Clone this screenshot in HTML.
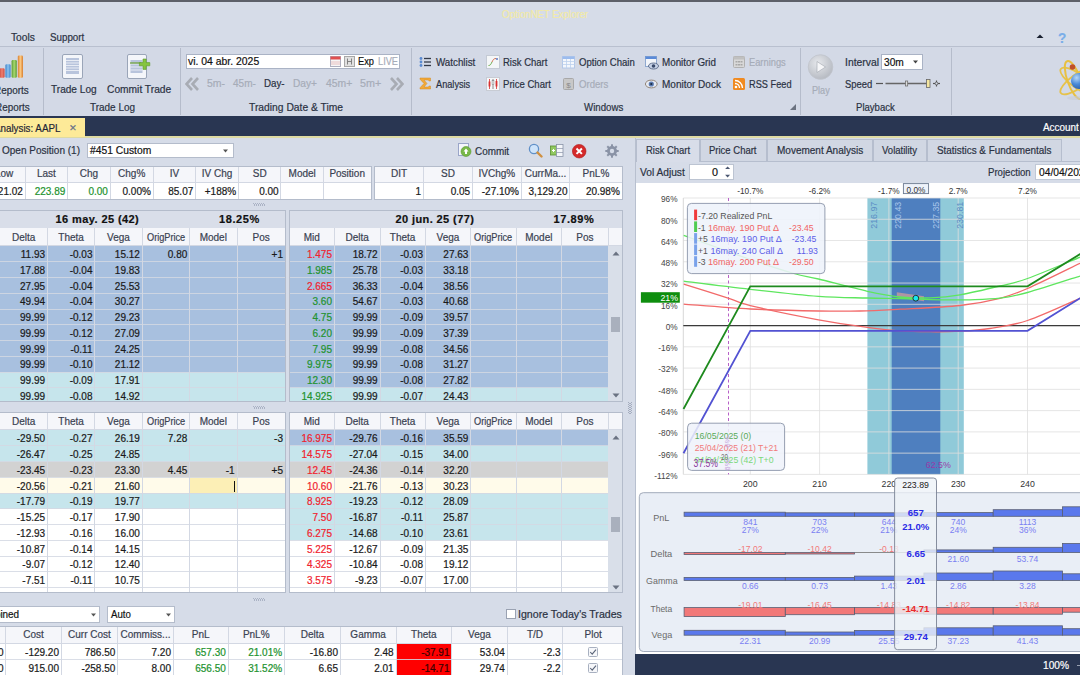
<!DOCTYPE html>
<html><head><meta charset="utf-8"><style>
html,body{margin:0;padding:0;width:1080px;height:675px;overflow:hidden;background:#d6dce8;}
body{position:relative;font-family:"Liberation Sans",sans-serif;font-size:10px;color:#1e1e1e;}
.t{position:absolute;white-space:nowrap;-webkit-text-stroke:0.2px currentColor;}
</style></head><body>
<div style="position:absolute;left:0px;top:0px;width:1080px;height:2px;background:#5d6069;"></div>
<svg style="position:absolute;left:1035.5px;top:34.3px" width="8" height="5"><path d="M0.5 4 L4 0.5 L7.5 4Z" fill="#1a2030"/></svg>
<div style="position:absolute;left:0px;top:47px;width:1080px;height:69px;background:#d3d9e6;"></div>
<div style="position:absolute;left:0px;top:46px;width:1080px;height:1px;background:#b9c0cf;"></div>
<div style="position:absolute;left:43.3px;top:47.5px;width:1px;height:67px;background:#b5bccb;"></div>
<div style="position:absolute;left:180px;top:47.5px;width:1px;height:67px;background:#b5bccb;"></div>
<div style="position:absolute;left:411.2px;top:47.5px;width:1px;height:67px;background:#b5bccb;"></div>
<div style="position:absolute;left:800.4px;top:47.5px;width:1px;height:67px;background:#b5bccb;"></div>
<div style="position:absolute;left:951px;top:47.5px;width:1px;height:67px;background:#b5bccb;"></div>
<svg style="position:absolute;left:790px;top:104px" width="7" height="7"><path d="M6 0 L6 6 L0 6Z" fill="#6b7280"/></svg>
<svg style="position:absolute;left:0px;top:54px" width="24" height="25">
<defs><linearGradient id="rbr" x1="0" x2="1"><stop offset="0" stop-color="#c84a40"/><stop offset="0.5" stop-color="#f08070"/><stop offset="1" stop-color="#c84a40"/></linearGradient>
<linearGradient id="rbb" x1="0" x2="1"><stop offset="0" stop-color="#3a80c8"/><stop offset="0.5" stop-color="#8cc4f0"/><stop offset="1" stop-color="#3a80c8"/></linearGradient>
<linearGradient id="rbg" x1="0" x2="1"><stop offset="0" stop-color="#5a9a30"/><stop offset="0.5" stop-color="#a8d870"/><stop offset="1" stop-color="#5a9a30"/></linearGradient>
<linearGradient id="rbo" x1="0" x2="1"><stop offset="0" stop-color="#d88030"/><stop offset="0.5" stop-color="#fcc880"/><stop offset="1" stop-color="#d88030"/></linearGradient></defs>
<rect x="-0.6" y="14.3" width="5.2" height="9.4" rx="1.2" fill="url(#rbr)"/>
<rect x="5.4" y="10.3" width="5.2" height="13.4" rx="1.2" fill="url(#rbb)"/>
<rect x="11.6" y="6.1" width="5.2" height="17.6" rx="1.2" fill="url(#rbg)"/>
<rect x="17.8" y="1.6" width="5.2" height="22.1" rx="1.2" fill="url(#rbo)"/>
</svg>
<svg style="position:absolute;left:62px;top:54px" width="21" height="25">
<rect x="0.5" y="0.5" width="20" height="24" rx="1.5" fill="#f4f6fa" stroke="#9aa5b8"/>
<rect x="4" y="4" width="13" height="16" fill="#b8c4dc"/>
<g stroke="#f4f6fa" stroke-width="0.8"><line x1="4" y1="6.5" x2="17" y2="6.5"/><line x1="4" y1="9" x2="17" y2="9"/><line x1="4" y1="11.5" x2="17" y2="11.5"/><line x1="4" y1="14" x2="17" y2="14"/><line x1="4" y1="16.5" x2="17" y2="16.5"/></g>
</svg>
<svg style="position:absolute;left:127px;top:54px" width="26" height="25">
<rect x="0.5" y="0.5" width="19" height="24" rx="1.5" fill="#f4f6fa" stroke="#9aa5b8"/>
<rect x="3.5" y="6" width="12" height="13" fill="#b8c4dc"/>
<g stroke="#f4f6fa" stroke-width="0.8"><line x1="3.5" y1="10" x2="15.5" y2="10"/><line x1="3.5" y1="13" x2="15.5" y2="13"/><line x1="3.5" y1="16" x2="15.5" y2="16"/></g>
<line x1="3" y1="9" x2="14" y2="9" stroke="#6aa030" stroke-width="1.2"/>
<path d="M16 5 h3.2 v3.6 h3.6 v3.2 h-3.6 v3.6 h-3.2 v-3.6 h-3.6 v-3.2 h3.6z" fill="#86c440" stroke="#5a9a28" stroke-width="0.6"/>
</svg>
<div style="position:absolute;left:186px;top:54px;width:214px;height:15px;background:#fff;border:1px solid #aab3c5;box-sizing:border-box;"></div>
<svg style="position:absolute;left:330px;top:56px" width="11" height="11">
<rect x="0.5" y="0.5" width="10" height="10" fill="#f6f6f6" stroke="#b0b0c0"/><rect x="0.5" y="0.5" width="10" height="3" fill="#e05050"/>
<g stroke="#e0a0a0" stroke-width="0.6"><line x1="1" y1="6" x2="10" y2="6"/><line x1="1" y1="8" x2="10" y2="8"/></g></svg>
<svg style="position:absolute;left:344px;top:56px" width="11" height="11">
<rect x="0.5" y="0.5" width="10" height="10" fill="#e0e0e0" stroke="#a8a8a8"/><path d="M3.5 2.5v6M7.5 2.5v6M3.5 5.5h4" stroke="#777" stroke-width="0.9"/></svg>
<svg style="position:absolute;left:185px;top:77px" width="15" height="14"><path d="M7 1 L1.5 7 L7 13 M13 1 L7.5 7 L13 13" fill="none" stroke="#a8acb4" stroke-width="2.6"/></svg>
<svg style="position:absolute;left:389px;top:77px" width="15" height="14"><path d="M8 1 L13.5 7 L8 13 M2 1 L7.5 7 L2 13" fill="none" stroke="#a8acb4" stroke-width="2.6"/></svg>
<svg style="position:absolute;left:419px;top:56px" width="13" height="12">
<circle cx="2" cy="2.5" r="1.4" fill="#5a8ad0"/><circle cx="2" cy="6" r="1.4" fill="#5a8ad0"/><circle cx="2" cy="9.5" r="1.4" fill="#5a8ad0"/>
<g stroke="#333a48" stroke-width="1.3"><line x1="5" y1="2.5" x2="12" y2="2.5"/><line x1="5" y1="6" x2="12" y2="6"/><line x1="5" y1="9.5" x2="12" y2="9.5"/></g></svg>
<svg style="position:absolute;left:486px;top:55px" width="14" height="14">
<rect x="0.5" y="0.5" width="13" height="13" fill="#f4f6f8" stroke="#c4cad4"/><path d="M2.5 10.5 C4.5 10.5 5 9 6 7" fill="none" stroke="#6aaa4a" stroke-width="1"/><path d="M6 7 C7 5 7.5 3.5 10 3.5" fill="none" stroke="#d07050" stroke-width="1"/><circle cx="11" cy="4" r="0.9" fill="#4a6ac0"/></svg>
<svg style="position:absolute;left:561.5px;top:55.5px" width="14" height="13">
<rect x="0.5" y="0.5" width="12" height="11.5" fill="#f4f7fc" stroke="#b4c8e8"/><rect x="0.5" y="0.5" width="12" height="2.5" fill="#9cbcee"/>
<g stroke="#bcd0ee" stroke-width="0.8"><line x1="0.5" y1="5.5" x2="12.5" y2="5.5"/><line x1="0.5" y1="8.5" x2="12.5" y2="8.5"/><line x1="4.5" y1="3" x2="4.5" y2="12"/><line x1="8.5" y1="3" x2="8.5" y2="12"/></g></svg>
<svg style="position:absolute;left:486px;top:77px" width="14" height="14">
<rect x="0.5" y="0.5" width="13" height="13" fill="#f6f7f9" stroke="#c8ccd4"/><g stroke-width="0.8"><line x1="3.5" y1="2" x2="3.5" y2="12" stroke="#d83030"/><line x1="10.5" y1="2" x2="10.5" y2="12" stroke="#d83030"/><line x1="7" y1="2" x2="7" y2="12" stroke="#707070"/></g>
<rect x="2.6" y="4.5" width="1.8" height="5" fill="#d83030"/><rect x="9.6" y="4" width="1.8" height="5.5" fill="#d83030"/><rect x="6.1" y="3.5" width="1.8" height="4" fill="#fff" stroke="#707070" stroke-width="0.5"/></svg>
<svg style="position:absolute;left:563px;top:78px" width="11" height="12">
<rect x="0.5" y="0.5" width="10" height="11" rx="1" fill="#c8c8c8" stroke="#a8a8a8"/><text x="5.5" y="9.5" font-size="8" text-anchor="middle" fill="#8a8a8a" font-family="Liberation Sans">$</text></svg>
<svg style="position:absolute;left:645px;top:56px" width="14" height="14">
<rect x="0.5" y="0.5" width="11" height="10" fill="#f2f5fa" stroke="#7a9ac8" stroke-width="0.8"/><rect x="0.5" y="0.5" width="11" height="2.5" fill="#5a8ad8"/>
<ellipse cx="8.5" cy="10" rx="5" ry="3" fill="#c8d4e8" stroke="#4a5a7a" stroke-width="0.8"/><circle cx="8.5" cy="10" r="1.8" fill="#3a4a6a"/></svg>
<svg style="position:absolute;left:645px;top:79px" width="13" height="10">
<ellipse cx="6.3" cy="5" rx="5.9" ry="3.9" fill="#e6eaf2" stroke="#8a7a6a" stroke-width="0.9"/><circle cx="6.3" cy="5" r="2.6" fill="#5a7ab0"/><circle cx="6.3" cy="5" r="1.1" fill="#1a2a40"/></svg>
<svg style="position:absolute;left:733px;top:56px" width="12" height="12">
<rect x="0.5" y="0.5" width="11" height="11" rx="1" fill="#d8d8d8" stroke="#b0b0b0"/><rect x="0.5" y="0.5" width="11" height="3" fill="#c0c0c0"/>
<g fill="#a8a8a8"><rect x="2.5" y="5" width="2" height="1.5"/><rect x="5" y="5" width="2" height="1.5"/><rect x="7.5" y="5" width="2" height="1.5"/><rect x="2.5" y="8" width="2" height="1.5"/><rect x="5" y="8" width="2" height="1.5"/><rect x="7.5" y="8" width="2" height="1.5"/></g></svg>
<svg style="position:absolute;left:733px;top:78px" width="12" height="12">
<rect x="0" y="0" width="12" height="12" rx="1.5" fill="#f08a20"/><circle cx="3" cy="9" r="1.3" fill="#fff"/>
<path d="M2 5.5 A4.5 4.5 0 0 1 6.5 10 M2 2.5 A7.5 7.5 0 0 1 9.5 10" fill="none" stroke="#fff" stroke-width="1.3"/></svg>
<svg style="position:absolute;left:807px;top:54px" width="27" height="27">
<defs><radialGradient id="pg" cx="0.4" cy="0.35" r="0.7"><stop offset="0" stop-color="#e6e8ec"/><stop offset="1" stop-color="#b4b8c0"/></radialGradient></defs>
<circle cx="13.5" cy="13" r="12.3" fill="url(#pg)" stroke="#c0c4cc" stroke-width="0.8"/><path d="M10 7.5 L18.5 13 L10 18.5Z" fill="#f6f6f8" stroke="#a0a4ac" stroke-width="0.6"/></svg>
<div style="position:absolute;left:880.5px;top:54px;width:42px;height:16px;background:#fff;border:1px solid #aab3c5;box-sizing:border-box;"></div>
<svg style="position:absolute;left:913px;top:60px" width="6" height="4"><path d="M0 0.5 L5 0.5 L2.5 3.5Z" fill="#444"/></svg>
<svg style="position:absolute;left:875px;top:78px" width="66" height="12">
<line x1="1" y1="5.5" x2="8" y2="5.5" stroke="#555" stroke-width="1.2"/>
<line x1="10.5" y1="5.5" x2="54" y2="5.5" stroke="#666" stroke-width="1.6"/>
<rect x="30.5" y="3" width="2.2" height="5" fill="#ddd" stroke="#666" stroke-width="0.7"/>
<rect x="51.5" y="1.5" width="3.5" height="8" fill="#f4e6a0" stroke="#666" stroke-width="0.8"/>
<line x1="58" y1="5.5" x2="65" y2="5.5" stroke="#555" stroke-width="1.2"/><line x1="61.5" y1="2.5" x2="61.5" y2="8.5" stroke="#555" stroke-width="1.2"/>
<circle cx="61.5" cy="5.5" r="1.4" fill="#d6dce8" stroke="#555" stroke-width="0.8"/>
</svg>
<svg style="position:absolute;left:1050px;top:56px" width="30" height="48">
<defs><radialGradient id="atb" cx="0.35" cy="0.3" r="0.8"><stop offset="0" stop-color="#b8d8f8"/><stop offset="0.5" stop-color="#4a8ad8"/><stop offset="1" stop-color="#2a5aa8"/></radialGradient></defs>
<ellipse cx="28" cy="25" rx="21" ry="7" transform="rotate(35 28 25)" fill="none" stroke="#e6c24a" stroke-width="1.8"/>
<ellipse cx="28" cy="25" rx="21" ry="7" transform="rotate(-35 28 25)" fill="none" stroke="#e6c24a" stroke-width="1.8"/>
<ellipse cx="24" cy="24" rx="6.5" ry="20" transform="rotate(-20 24 24)" fill="none" stroke="#e8c040" stroke-width="2"/>
<ellipse cx="26" cy="42" rx="9" ry="2" fill="#c8ccd6" opacity="0.6"/>
<circle cx="29" cy="25" r="8" fill="url(#atb)"/><circle cx="22.5" cy="11" r="2.8" fill="#c0502a"/></svg>
<div style="position:absolute;left:0px;top:116px;width:1080px;height:21px;background:#293652;"></div>
<div style="position:absolute;left:0px;top:136px;width:1080px;height:2px;background:#dedaa2;"></div>
<div style="position:absolute;left:0px;top:118px;width:85px;height:19px;background:#fdea98;"></div>
<div class="t" style="left:501.70px;top:8.99px;font-size:11px;line-height:11px;color:#f2eaa6;transform:scaleX(0.8756);transform-origin:0 0;">OptionNET Explorer</div>
<div class="t" style="left:11.10px;top:31.89px;font-size:11px;line-height:11px;color:#2a3142;transform:scaleX(0.9308);transform-origin:0 0;">Tools</div>
<div class="t" style="left:49.50px;top:31.89px;font-size:11px;line-height:11px;color:#2a3142;transform:scaleX(0.8904);transform-origin:0 0;">Support</div>
<div class="t" style="left:-6.06px;top:84.69px;font-size:11px;line-height:11px;color:#2a3142;transform:scaleX(0.9000);transform-origin:0 0;">Reports</div>
<div class="t" style="left:-4.66px;top:102.29px;font-size:11px;line-height:11px;color:#2a3142;transform:scaleX(0.9000);transform-origin:0 0;">Reports</div>
<div class="t" style="left:50.60px;top:84.29px;font-size:11px;line-height:11px;color:#2a3142;transform:scaleX(0.9169);transform-origin:0 0;">Trade Log</div>
<div class="t" style="left:106.80px;top:84.29px;font-size:11px;line-height:11px;color:#2a3142;transform:scaleX(0.9295);transform-origin:0 0;">Commit Trade</div>
<div class="t" style="left:89.60px;top:102.29px;font-size:11px;line-height:11px;color:#2a3142;transform:scaleX(0.9048);transform-origin:0 0;">Trade Log</div>
<div class="t" style="left:248.90px;top:102.29px;font-size:11px;line-height:11px;color:#2a3142;transform:scaleX(0.9357);transform-origin:0 0;">Trading Date &amp; Time</div>
<div class="t" style="left:584.00px;top:102.29px;font-size:11px;line-height:11px;color:#2a3142;transform:scaleX(0.8807);transform-origin:0 0;">Windows</div>
<div class="t" style="left:855.60px;top:102.29px;font-size:11px;line-height:11px;color:#2a3142;transform:scaleX(0.8693);transform-origin:0 0;">Playback</div>
<div class="t" style="left:188.40px;top:56.29px;font-size:11px;line-height:11px;color:#111;transform:scaleX(0.9466);transform-origin:0 0;">vi. 04 abr. 2025</div>
<div class="t" style="left:358.40px;top:56.29px;font-size:11px;line-height:11px;color:#111;transform:scaleX(0.8441);transform-origin:0 0;">Exp</div>
<div class="t" style="left:378.40px;top:56.29px;font-size:11px;line-height:11px;color:#a6acb8;transform:scaleX(0.8387);transform-origin:0 0;">LIVE</div>
<div class="t" style="left:207.00px;top:78.49px;font-size:11px;line-height:11px;color:#a6acb8;transform:scaleX(0.9503);transform-origin:0 0;">5m-</div>
<div class="t" style="left:232.70px;top:78.49px;font-size:11px;line-height:11px;color:#a6acb8;transform:scaleX(0.9098);transform-origin:0 0;">45m-</div>
<div class="t" style="left:263.80px;top:78.49px;font-size:11px;line-height:11px;color:#2a3142;transform:scaleX(0.8870);transform-origin:0 0;">Day-</div>
<div class="t" style="left:292.70px;top:78.49px;font-size:11px;line-height:11px;color:#a6acb8;transform:scaleX(0.9236);transform-origin:0 0;">Day+</div>
<div class="t" style="left:325.50px;top:78.49px;font-size:11px;line-height:11px;color:#a6acb8;transform:scaleX(0.9453);transform-origin:0 0;">45m+</div>
<div class="t" style="left:360.40px;top:78.49px;font-size:11px;line-height:11px;color:#a6acb8;transform:scaleX(0.9768);transform-origin:0 0;">5m+</div>
<div class="t" style="left:435.70px;top:56.89px;font-size:11px;line-height:11px;color:#2a3142;transform:scaleX(0.8889);transform-origin:0 0;">Watchlist</div>
<div class="t" style="left:502.80px;top:56.89px;font-size:11px;line-height:11px;color:#2a3142;transform:scaleX(0.8648);transform-origin:0 0;">Risk Chart</div>
<div class="t" style="left:578.80px;top:56.89px;font-size:11px;line-height:11px;color:#2a3142;transform:scaleX(0.8691);transform-origin:0 0;">Option Chain</div>
<div class="t" style="left:662.20px;top:56.89px;font-size:11px;line-height:11px;color:#2a3142;transform:scaleX(0.8924);transform-origin:0 0;">Monitor Grid</div>
<div class="t" style="left:749.30px;top:56.89px;font-size:11px;line-height:11px;color:#a6acb8;transform:scaleX(0.8454);transform-origin:0 0;">Earnings</div>
<div class="t" style="left:844.90px;top:56.89px;font-size:11px;line-height:11px;color:#2a3142;transform:scaleX(0.9426);transform-origin:0 0;">Interval</div>
<div class="t" style="left:435.70px;top:79.09px;font-size:11px;line-height:11px;color:#2a3142;transform:scaleX(0.8350);transform-origin:0 0;">Analysis</div>
<div class="t" style="left:502.80px;top:79.09px;font-size:11px;line-height:11px;color:#2a3142;transform:scaleX(0.8689);transform-origin:0 0;">Price Chart</div>
<div class="t" style="left:579.00px;top:79.09px;font-size:11px;line-height:11px;color:#a6acb8;transform:scaleX(0.8716);transform-origin:0 0;">Orders</div>
<div class="t" style="left:662.20px;top:79.09px;font-size:11px;line-height:11px;color:#2a3142;transform:scaleX(0.9090);transform-origin:0 0;">Monitor Dock</div>
<div class="t" style="left:749.30px;top:79.09px;font-size:11px;line-height:11px;color:#2a3142;transform:scaleX(0.8375);transform-origin:0 0;">RSS Feed</div>
<div class="t" style="left:844.90px;top:79.09px;font-size:11px;line-height:11px;color:#2a3142;transform:scaleX(0.8583);transform-origin:0 0;">Speed</div>
<div class="t" style="left:811.60px;top:84.69px;font-size:11px;line-height:11px;color:#a6acb8;transform:scaleX(0.8272);transform-origin:0 0;">Play</div>
<div class="t" style="left:884.00px;top:56.99px;font-size:11px;line-height:11px;color:#111;transform:scaleX(0.9254);transform-origin:0 0;">30m</div>
<div class="t" style="left:-6.39px;top:122.89px;font-size:11px;line-height:11px;color:#1e2536;transform:scaleX(0.8900);transform-origin:0 0;">Analysis: AAPL</div>
<div class="t" style="left:69.00px;top:123.78px;font-size:9px;line-height:9px;color:#66708a;transform:scaleX(1.0370);transform-origin:0 0;">&#x2715;</div>
<div class="t" style="left:1043.00px;top:122.39px;font-size:11px;line-height:11px;color:#ffffff;transform:scaleX(0.9000);transform-origin:0 0;">Account</div>
<svg style="position:absolute;left:419px;top:77px" width="13" height="13">
<path d="M1 1 H11.5 V4 H10 L9.5 3 H5 L8 6.5 L5 10 H9.5 L10 9 H11.5 V12 H1 V10.8 L5 6.5 L1 2.2Z" fill="#f2a93a" stroke="#d08a20" stroke-width="0.5"/></svg>
<div class="t" style="left:1058.00px;top:30.00px;font-size:15px;line-height:15px;color:#7aaee8;font-weight:bold;transform:scaleX(0.9059);transform-origin:0 0;">?</div>
<div class="t" style="left:2.00px;top:145.49px;font-size:11px;line-height:11px;color:#2a3142;transform:scaleX(0.9113);transform-origin:0 0;">Open Position (1)</div>
<div style="position:absolute;left:87px;top:143px;width:146.5px;height:15px;background:#fff;border:1px solid #b4bccb;box-sizing:border-box;"></div>
<div class="t" style="left:89.90px;top:145.49px;font-size:11px;line-height:11px;color:#111;transform:scaleX(0.9355);transform-origin:0 0;">#451 Custom</div>
<svg style="position:absolute;left:223px;top:149px" width="6" height="4"><path d="M0 0.5 L5 0.5 L2.5 3.5Z" fill="#555"/></svg>
<svg style="position:absolute;left:458px;top:143px" width="14" height="14">
<rect x="0.5" y="0.5" width="10" height="12" fill="#f4f6fa" stroke="#9aa5c8"/>
<circle cx="8" cy="8.5" r="5" fill="#78b848" stroke="#5a9a30" stroke-width="0.6"/><path d="M8 5.5 L10.5 8.5 H9 V11 H7 V8.5 H5.5Z" fill="#fff"/></svg>
<div class="t" style="left:474.80px;top:145.79px;font-size:11px;line-height:11px;color:#2a3142;transform:scaleX(0.9001);transform-origin:0 0;">Commit</div>
<svg style="position:absolute;left:528px;top:143px" width="15" height="15">
<circle cx="6" cy="6" r="4.6" fill="#cfe4fa" stroke="#6090c8" stroke-width="1.3"/><path d="M9.5 9.5 L13.5 13.5" stroke="#d09040" stroke-width="2.4" stroke-linecap="round"/></svg>
<svg style="position:absolute;left:550px;top:144px" width="14" height="13">
<rect x="0.5" y="2" width="6" height="9" fill="#90c860" stroke="#5a9030" stroke-width="0.8"/>
<rect x="6.5" y="0.5" width="6.5" height="12" fill="#f4f6fa" stroke="#8a94a8" stroke-width="0.8"/>
<g stroke="#8a94a8" stroke-width="0.7"><line x1="6.5" y1="4.5" x2="13" y2="4.5"/><line x1="6.5" y1="8.5" x2="13" y2="8.5"/></g>
<path d="M2 6.5 h3 M3.5 5 v3" stroke="#fff" stroke-width="1"/></svg>
<svg style="position:absolute;left:572px;top:144px" width="15" height="15">
<circle cx="7.2" cy="7.2" r="6.8" fill="#d42a2a"/><circle cx="7.2" cy="7.2" r="6.8" fill="none" stroke="#b01818" stroke-width="0.6"/>
<path d="M4.5 4.5 L9.9 9.9 M9.9 4.5 L4.5 9.9" stroke="#fff" stroke-width="2"/></svg>
<svg style="position:absolute;left:605px;top:144px" width="14" height="14">
<g fill="#8a93a6"><circle cx="7" cy="7" r="5"/>
<rect x="6" y="0.3" width="2" height="3"/><rect x="6" y="10.7" width="2" height="3"/><rect x="0.3" y="6" width="3" height="2"/><rect x="10.7" y="6" width="3" height="2"/>
<rect x="6" y="0.3" width="2" height="3" transform="rotate(45 7 7)"/><rect x="6" y="10.7" width="2" height="3" transform="rotate(45 7 7)"/><rect x="0.3" y="6" width="3" height="2" transform="rotate(45 7 7)"/><rect x="10.7" y="6" width="3" height="2" transform="rotate(45 7 7)"/></g>
<circle cx="7" cy="7" r="2.2" fill="#d6dce8"/></svg>
<div style="position:absolute;left:-17px;top:165.5px;width:387.8px;height:17.7px;background:#f5f6fa;"></div>
<div class="t" style="left:-17px;top:164.9px;width:42.2px;height:17.7px;line-height:17.7px;text-align:center;font-size:10px;color:#3a4252;">Low</div>
<div class="t" style="left:25.2px;top:164.9px;width:42.39999999999999px;height:17.7px;line-height:17.7px;text-align:center;font-size:10px;color:#3a4252;">Last</div>
<div class="t" style="left:67.6px;top:164.9px;width:42.60000000000001px;height:17.7px;line-height:17.7px;text-align:center;font-size:10px;color:#3a4252;">Chg</div>
<div class="t" style="left:110.2px;top:164.9px;width:42.999999999999986px;height:17.7px;line-height:17.7px;text-align:center;font-size:10px;color:#3a4252;">Chg%</div>
<div class="t" style="left:153.2px;top:164.9px;width:42.400000000000006px;height:17.7px;line-height:17.7px;text-align:center;font-size:10px;color:#3a4252;">IV</div>
<div class="t" style="left:195.6px;top:164.9px;width:42.900000000000006px;height:17.7px;line-height:17.7px;text-align:center;font-size:10px;color:#3a4252;">IV Chg</div>
<div class="t" style="left:238.5px;top:164.9px;width:42.39999999999998px;height:17.7px;line-height:17.7px;text-align:center;font-size:10px;color:#3a4252;">SD</div>
<div class="t" style="left:280.9px;top:164.9px;width:42.700000000000045px;height:17.7px;line-height:17.7px;text-align:center;font-size:10px;color:#3a4252;">Model</div>
<div class="t" style="left:323.6px;top:164.9px;width:47.19999999999999px;height:17.7px;line-height:17.7px;text-align:center;font-size:10px;color:#3a4252;">Position</div>
<div style="position:absolute;left:-17px;top:183.2px;width:387.8px;height:16px;background:#ffffff;"></div>
<div class="t" style="left:-17px;top:184.39999999999998px;width:39.900000000000006px;height:16px;line-height:16px;text-align:right;font-size:10px;color:#1a1a1a;">221.02</div>
<div class="t" style="left:25.2px;top:184.39999999999998px;width:40.099999999999994px;height:16px;line-height:16px;text-align:right;font-size:10px;color:#1a1a1a;color:#22922e;">223.89</div>
<div class="t" style="left:67.6px;top:184.39999999999998px;width:40.30000000000001px;height:16px;line-height:16px;text-align:right;font-size:10px;color:#1a1a1a;color:#22922e;">0.00</div>
<div class="t" style="left:110.2px;top:184.39999999999998px;width:40.69999999999999px;height:16px;line-height:16px;text-align:right;font-size:10px;color:#1a1a1a;">0.00%</div>
<div class="t" style="left:153.2px;top:184.39999999999998px;width:40.10000000000001px;height:16px;line-height:16px;text-align:right;font-size:10px;color:#1a1a1a;">85.07</div>
<div class="t" style="left:195.6px;top:184.39999999999998px;width:40.60000000000001px;height:16px;line-height:16px;text-align:right;font-size:10px;color:#1a1a1a;">+188%</div>
<div class="t" style="left:238.5px;top:184.39999999999998px;width:40.09999999999998px;height:16px;line-height:16px;text-align:right;font-size:10px;color:#1a1a1a;">0.00</div>
<div style="position:absolute;left:-17px;top:182.2px;width:387.8px;height:1px;background:#d3d8e3;"></div>
<div style="position:absolute;left:24.7px;top:165.5px;width:1px;height:33.69999999999999px;background:#d3d8e3;"></div>
<div style="position:absolute;left:67.1px;top:165.5px;width:1px;height:33.69999999999999px;background:#d3d8e3;"></div>
<div style="position:absolute;left:109.7px;top:165.5px;width:1px;height:33.69999999999999px;background:#d3d8e3;"></div>
<div style="position:absolute;left:152.7px;top:165.5px;width:1px;height:33.69999999999999px;background:#d3d8e3;"></div>
<div style="position:absolute;left:195.1px;top:165.5px;width:1px;height:33.69999999999999px;background:#d3d8e3;"></div>
<div style="position:absolute;left:238.0px;top:165.5px;width:1px;height:33.69999999999999px;background:#d3d8e3;"></div>
<div style="position:absolute;left:280.4px;top:165.5px;width:1px;height:33.69999999999999px;background:#d3d8e3;"></div>
<div style="position:absolute;left:323.1px;top:165.5px;width:1px;height:33.69999999999999px;background:#d3d8e3;"></div>
<div style="position:absolute;left:-1px;top:165.5px;width:372.5px;height:34px;border:1px solid #b4bccb;box-sizing:border-box;"></div>
<div style="position:absolute;left:374.6px;top:165.5px;width:247.5px;height:17.7px;background:#f5f6fa;"></div>
<div class="t" style="left:374.6px;top:164.9px;width:48.799999999999955px;height:17.7px;line-height:17.7px;text-align:center;font-size:10px;color:#3a4252;">DIT</div>
<div class="t" style="left:423.4px;top:164.9px;width:49.10000000000002px;height:17.7px;line-height:17.7px;text-align:center;font-size:10px;color:#3a4252;">SD</div>
<div class="t" style="left:472.5px;top:164.9px;width:48.799999999999955px;height:17.7px;line-height:17.7px;text-align:center;font-size:10px;color:#3a4252;">IVChg%</div>
<div class="t" style="left:521.3px;top:164.9px;width:48.5px;height:17.7px;line-height:17.7px;text-align:center;font-size:10px;color:#3a4252;">CurrMa...</div>
<div class="t" style="left:569.8px;top:164.9px;width:52.30000000000007px;height:17.7px;line-height:17.7px;text-align:center;font-size:10px;color:#3a4252;">PnL%</div>
<div style="position:absolute;left:374.6px;top:183.2px;width:247.5px;height:16px;background:#ffffff;"></div>
<div class="t" style="left:374.6px;top:184.39999999999998px;width:46.49999999999996px;height:16px;line-height:16px;text-align:right;font-size:10px;color:#1a1a1a;">1</div>
<div class="t" style="left:423.4px;top:184.39999999999998px;width:46.800000000000026px;height:16px;line-height:16px;text-align:right;font-size:10px;color:#1a1a1a;">0.05</div>
<div class="t" style="left:472.5px;top:184.39999999999998px;width:46.49999999999996px;height:16px;line-height:16px;text-align:right;font-size:10px;color:#1a1a1a;">-27.10%</div>
<div class="t" style="left:521.3px;top:184.39999999999998px;width:46.2px;height:16px;line-height:16px;text-align:right;font-size:10px;color:#1a1a1a;">3,129.20</div>
<div class="t" style="left:569.8px;top:184.39999999999998px;width:50.00000000000007px;height:16px;line-height:16px;text-align:right;font-size:10px;color:#1a1a1a;">20.98%</div>
<div style="position:absolute;left:374.6px;top:182.2px;width:247.5px;height:1px;background:#d3d8e3;"></div>
<div style="position:absolute;left:422.9px;top:165.5px;width:1px;height:33.69999999999999px;background:#d3d8e3;"></div>
<div style="position:absolute;left:472.0px;top:165.5px;width:1px;height:33.69999999999999px;background:#d3d8e3;"></div>
<div style="position:absolute;left:520.8px;top:165.5px;width:1px;height:33.69999999999999px;background:#d3d8e3;"></div>
<div style="position:absolute;left:569.3px;top:165.5px;width:1px;height:33.69999999999999px;background:#d3d8e3;"></div>
<div style="position:absolute;left:374px;top:165.5px;width:248.6px;height:34px;border:1px solid #b4bccb;box-sizing:border-box;"></div>
<svg style="position:absolute;left:253px;top:202.5px" width="13" height="4"><g fill="#aab2c4"><rect x="0" y="0" width="1" height="1"/><rect x="0" y="1" width="0" height="1"/><rect x="1" y="2" width="1" height="1"/><rect x="1" y="1" width="1" height="1"/><rect x="2" y="0" width="1" height="1"/><rect x="2" y="1" width="0" height="1"/><rect x="3" y="2" width="1" height="1"/><rect x="3" y="1" width="1" height="1"/><rect x="4" y="0" width="1" height="1"/><rect x="4" y="1" width="0" height="1"/><rect x="5" y="2" width="1" height="1"/><rect x="5" y="1" width="1" height="1"/><rect x="6" y="0" width="1" height="1"/><rect x="6" y="1" width="0" height="1"/><rect x="7" y="2" width="1" height="1"/><rect x="7" y="1" width="1" height="1"/><rect x="8" y="0" width="1" height="1"/><rect x="8" y="1" width="0" height="1"/><rect x="9" y="2" width="1" height="1"/><rect x="9" y="1" width="1" height="1"/><rect x="10" y="0" width="1" height="1"/><rect x="10" y="1" width="0" height="1"/><rect x="11" y="2" width="1" height="1"/><rect x="11" y="1" width="1" height="1"/></g></svg>
<div style="position:absolute;left:-1px;top:210px;width:286.8px;height:191.5px;background:#fff;"></div>
<div style="position:absolute;left:-1px;top:210px;width:286.8px;height:18px;background:#d9dee9;"></div>
<div class="t " style="left:55.6px;top:213px;font-size:11px;font-weight:bold;color:#111;line-height:13px;letter-spacing:0.4px;">16 may. 25 (42)</div>
<div class="t " style="left:219px;top:213px;font-size:11px;font-weight:bold;color:#111;line-height:13px;letter-spacing:0.6px;">18.25%</div>
<div style="position:absolute;left:0px;top:228px;width:285.3px;height:18px;background:#f5f6fa;"></div>
<div class="t" style="left:0px;top:228.5px;width:47.4px;height:18px;line-height:18px;text-align:center;font-size:10px;color:#3a4252;">Delta</div>
<div class="t" style="left:47.4px;top:228.5px;width:47.4px;height:18px;line-height:18px;text-align:center;font-size:10px;color:#3a4252;">Theta</div>
<div class="t" style="left:94.8px;top:228.5px;width:47.39999999999999px;height:18px;line-height:18px;text-align:center;font-size:10px;color:#3a4252;">Vega</div>
<div class="t" style="left:146.80px;top:228.50px;height:18px;line-height:18px;font-size:10px;color:#3a4252;transform:scaleX(0.9167);transform-origin:0 0;">OrigPrice</div>
<div class="t" style="left:189.6px;top:228.5px;width:47.400000000000006px;height:18px;line-height:18px;text-align:center;font-size:10px;color:#3a4252;">Model</div>
<div class="t" style="left:237px;top:228.5px;width:48.30000000000001px;height:18px;line-height:18px;text-align:center;font-size:10px;color:#3a4252;">Pos</div>
<div style="position:absolute;left:0px;top:246.0px;width:285.3px;height:15.75px;background:#a8c0df;"></div>
<div class="t" style="left:0px;top:247.2px;width:45.1px;height:15.75px;line-height:15.75px;text-align:right;font-size:10px;color:#1a1a1a;">11.93</div>
<div class="t" style="left:47.4px;top:247.2px;width:45.1px;height:15.75px;line-height:15.75px;text-align:right;font-size:10px;color:#1a1a1a;">-0.03</div>
<div class="t" style="left:94.8px;top:247.2px;width:45.099999999999994px;height:15.75px;line-height:15.75px;text-align:right;font-size:10px;color:#1a1a1a;">15.12</div>
<div class="t" style="left:142.2px;top:247.2px;width:45.10000000000001px;height:15.75px;line-height:15.75px;text-align:right;font-size:10px;color:#1a1a1a;">0.80</div>
<div class="t" style="left:237px;top:247.2px;width:46.000000000000014px;height:15.75px;line-height:15.75px;text-align:right;font-size:10px;color:#1a1a1a;">+1</div>
<div style="position:absolute;left:0px;top:261.75px;width:285.3px;height:15.75px;background:#a8c0df;"></div>
<div class="t" style="left:0px;top:262.95px;width:45.1px;height:15.75px;line-height:15.75px;text-align:right;font-size:10px;color:#1a1a1a;">17.88</div>
<div class="t" style="left:47.4px;top:262.95px;width:45.1px;height:15.75px;line-height:15.75px;text-align:right;font-size:10px;color:#1a1a1a;">-0.04</div>
<div class="t" style="left:94.8px;top:262.95px;width:45.099999999999994px;height:15.75px;line-height:15.75px;text-align:right;font-size:10px;color:#1a1a1a;">19.83</div>
<div style="position:absolute;left:0px;top:277.5px;width:285.3px;height:15.75px;background:#a8c0df;"></div>
<div class="t" style="left:0px;top:278.7px;width:45.1px;height:15.75px;line-height:15.75px;text-align:right;font-size:10px;color:#1a1a1a;">27.95</div>
<div class="t" style="left:47.4px;top:278.7px;width:45.1px;height:15.75px;line-height:15.75px;text-align:right;font-size:10px;color:#1a1a1a;">-0.04</div>
<div class="t" style="left:94.8px;top:278.7px;width:45.099999999999994px;height:15.75px;line-height:15.75px;text-align:right;font-size:10px;color:#1a1a1a;">25.53</div>
<div style="position:absolute;left:0px;top:293.25px;width:285.3px;height:15.75px;background:#a8c0df;"></div>
<div class="t" style="left:0px;top:294.45px;width:45.1px;height:15.75px;line-height:15.75px;text-align:right;font-size:10px;color:#1a1a1a;">49.94</div>
<div class="t" style="left:47.4px;top:294.45px;width:45.1px;height:15.75px;line-height:15.75px;text-align:right;font-size:10px;color:#1a1a1a;">-0.04</div>
<div class="t" style="left:94.8px;top:294.45px;width:45.099999999999994px;height:15.75px;line-height:15.75px;text-align:right;font-size:10px;color:#1a1a1a;">30.27</div>
<div style="position:absolute;left:0px;top:309.0px;width:285.3px;height:15.75px;background:#a8c0df;"></div>
<div class="t" style="left:0px;top:310.2px;width:45.1px;height:15.75px;line-height:15.75px;text-align:right;font-size:10px;color:#1a1a1a;">99.99</div>
<div class="t" style="left:47.4px;top:310.2px;width:45.1px;height:15.75px;line-height:15.75px;text-align:right;font-size:10px;color:#1a1a1a;">-0.12</div>
<div class="t" style="left:94.8px;top:310.2px;width:45.099999999999994px;height:15.75px;line-height:15.75px;text-align:right;font-size:10px;color:#1a1a1a;">29.23</div>
<div style="position:absolute;left:0px;top:324.75px;width:285.3px;height:15.75px;background:#a8c0df;"></div>
<div class="t" style="left:0px;top:325.95px;width:45.1px;height:15.75px;line-height:15.75px;text-align:right;font-size:10px;color:#1a1a1a;">99.99</div>
<div class="t" style="left:47.4px;top:325.95px;width:45.1px;height:15.75px;line-height:15.75px;text-align:right;font-size:10px;color:#1a1a1a;">-0.12</div>
<div class="t" style="left:94.8px;top:325.95px;width:45.099999999999994px;height:15.75px;line-height:15.75px;text-align:right;font-size:10px;color:#1a1a1a;">27.09</div>
<div style="position:absolute;left:0px;top:340.5px;width:285.3px;height:15.75px;background:#a8c0df;"></div>
<div class="t" style="left:0px;top:341.7px;width:45.1px;height:15.75px;line-height:15.75px;text-align:right;font-size:10px;color:#1a1a1a;">99.99</div>
<div class="t" style="left:47.4px;top:341.7px;width:45.1px;height:15.75px;line-height:15.75px;text-align:right;font-size:10px;color:#1a1a1a;">-0.11</div>
<div class="t" style="left:94.8px;top:341.7px;width:45.099999999999994px;height:15.75px;line-height:15.75px;text-align:right;font-size:10px;color:#1a1a1a;">24.25</div>
<div style="position:absolute;left:0px;top:356.25px;width:285.3px;height:15.75px;background:#a8c0df;"></div>
<div class="t" style="left:0px;top:357.45px;width:45.1px;height:15.75px;line-height:15.75px;text-align:right;font-size:10px;color:#1a1a1a;">99.99</div>
<div class="t" style="left:47.4px;top:357.45px;width:45.1px;height:15.75px;line-height:15.75px;text-align:right;font-size:10px;color:#1a1a1a;">-0.10</div>
<div class="t" style="left:94.8px;top:357.45px;width:45.099999999999994px;height:15.75px;line-height:15.75px;text-align:right;font-size:10px;color:#1a1a1a;">21.12</div>
<div style="position:absolute;left:0px;top:372.0px;width:285.3px;height:15.75px;background:#c6e5ec;"></div>
<div class="t" style="left:0px;top:373.2px;width:45.1px;height:15.75px;line-height:15.75px;text-align:right;font-size:10px;color:#1a1a1a;">99.99</div>
<div class="t" style="left:47.4px;top:373.2px;width:45.1px;height:15.75px;line-height:15.75px;text-align:right;font-size:10px;color:#1a1a1a;">-0.09</div>
<div class="t" style="left:94.8px;top:373.2px;width:45.099999999999994px;height:15.75px;line-height:15.75px;text-align:right;font-size:10px;color:#1a1a1a;">17.91</div>
<div style="position:absolute;left:0px;top:387.75px;width:285.3px;height:12.75px;background:#c6e5ec;"></div>
<div class="t" style="left:0px;top:388.95px;width:45.1px;height:15.75px;line-height:15.75px;text-align:right;font-size:10px;color:#1a1a1a;">99.99</div>
<div class="t" style="left:47.4px;top:388.95px;width:45.1px;height:15.75px;line-height:15.75px;text-align:right;font-size:10px;color:#1a1a1a;">-0.08</div>
<div class="t" style="left:94.8px;top:388.95px;width:45.099999999999994px;height:15.75px;line-height:15.75px;text-align:right;font-size:10px;color:#1a1a1a;">14.92</div>
<div style="position:absolute;left:0px;top:245px;width:285.3px;height:1px;background:#d3d8e3;"></div>
<div style="position:absolute;left:0px;top:261.25px;width:285.3px;height:1px;background:#d3d8e3;opacity:0.85;"></div>
<div style="position:absolute;left:0px;top:277.0px;width:285.3px;height:1px;background:#d3d8e3;opacity:0.85;"></div>
<div style="position:absolute;left:0px;top:292.75px;width:285.3px;height:1px;background:#d3d8e3;opacity:0.85;"></div>
<div style="position:absolute;left:0px;top:308.5px;width:285.3px;height:1px;background:#d3d8e3;opacity:0.85;"></div>
<div style="position:absolute;left:0px;top:324.25px;width:285.3px;height:1px;background:#d3d8e3;opacity:0.85;"></div>
<div style="position:absolute;left:0px;top:340.0px;width:285.3px;height:1px;background:#d3d8e3;opacity:0.85;"></div>
<div style="position:absolute;left:0px;top:355.75px;width:285.3px;height:1px;background:#d3d8e3;opacity:0.85;"></div>
<div style="position:absolute;left:0px;top:371.5px;width:285.3px;height:1px;background:#d3d8e3;opacity:0.85;"></div>
<div style="position:absolute;left:0px;top:387.25px;width:285.3px;height:1px;background:#d3d8e3;opacity:0.85;"></div>
<div style="position:absolute;left:46.9px;top:228px;width:1px;height:172.5px;background:#d3d8e3;"></div>
<div style="position:absolute;left:94.3px;top:228px;width:1px;height:172.5px;background:#d3d8e3;"></div>
<div style="position:absolute;left:141.7px;top:228px;width:1px;height:172.5px;background:#d3d8e3;"></div>
<div style="position:absolute;left:189.1px;top:228px;width:1px;height:172.5px;background:#d3d8e3;"></div>
<div style="position:absolute;left:236.5px;top:228px;width:1px;height:172.5px;background:#d3d8e3;"></div>
<div style="position:absolute;left:-1px;top:210px;width:286.8px;height:191.5px;border:1px solid #b4bccb;box-sizing:border-box;"></div>
<div style="position:absolute;left:289px;top:210px;width:333.3px;height:191.5px;background:#fff;"></div>
<div style="position:absolute;left:289px;top:210px;width:333.3px;height:18px;background:#d9dee9;"></div>
<div class="t " style="left:395.5px;top:213px;font-size:11px;font-weight:bold;color:#111;line-height:13px;letter-spacing:0.4px;">20 jun. 25 (77)</div>
<div class="t " style="left:553.5px;top:213px;font-size:11px;font-weight:bold;color:#111;line-height:13px;letter-spacing:0.6px;">17.89%</div>
<div style="position:absolute;left:289.3px;top:228px;width:332.99999999999994px;height:18px;background:#f5f6fa;"></div>
<div class="t" style="left:289.3px;top:228.5px;width:45.0px;height:18px;line-height:18px;text-align:center;font-size:10px;color:#3a4252;">Mid</div>
<div class="t" style="left:334.3px;top:228.5px;width:45.69999999999999px;height:18px;line-height:18px;text-align:center;font-size:10px;color:#3a4252;">Delta</div>
<div class="t" style="left:380px;top:228.5px;width:45.30000000000001px;height:18px;line-height:18px;text-align:center;font-size:10px;color:#3a4252;">Theta</div>
<div class="t" style="left:425.3px;top:228.5px;width:45.39999999999998px;height:18px;line-height:18px;text-align:center;font-size:10px;color:#3a4252;">Vega</div>
<div class="t" style="left:474.25px;top:228.50px;height:18px;line-height:18px;font-size:10px;color:#3a4252;transform:scaleX(0.9167);transform-origin:0 0;">OrigPrice</div>
<div class="t" style="left:516px;top:228.5px;width:45.700000000000045px;height:18px;line-height:18px;text-align:center;font-size:10px;color:#3a4252;">Model</div>
<div class="t" style="left:561.7px;top:228.5px;width:46.59999999999991px;height:18px;line-height:18px;text-align:center;font-size:10px;color:#3a4252;">Pos</div>
<div class="t" style="left:608.3px;top:228.5px;width:14.0px;height:18px;line-height:18px;text-align:center;font-size:10px;color:#3a4252;"></div>
<div style="position:absolute;left:289.3px;top:246.0px;width:332.99999999999994px;height:15.75px;background:#a8c0df;"></div>
<div class="t" style="left:289.3px;top:247.2px;width:42.7px;height:15.75px;line-height:15.75px;text-align:right;font-size:10px;color:#1a1a1a;color:#f0222e;">1.475</div>
<div class="t" style="left:334.3px;top:247.2px;width:43.39999999999999px;height:15.75px;line-height:15.75px;text-align:right;font-size:10px;color:#1a1a1a;">18.72</div>
<div class="t" style="left:380px;top:247.2px;width:43.000000000000014px;height:15.75px;line-height:15.75px;text-align:right;font-size:10px;color:#1a1a1a;">-0.03</div>
<div class="t" style="left:425.3px;top:247.2px;width:43.09999999999998px;height:15.75px;line-height:15.75px;text-align:right;font-size:10px;color:#1a1a1a;">27.63</div>
<div style="position:absolute;left:289.3px;top:261.75px;width:332.99999999999994px;height:15.75px;background:#a8c0df;"></div>
<div class="t" style="left:289.3px;top:262.95px;width:42.7px;height:15.75px;line-height:15.75px;text-align:right;font-size:10px;color:#1a1a1a;color:#22922e;">1.985</div>
<div class="t" style="left:334.3px;top:262.95px;width:43.39999999999999px;height:15.75px;line-height:15.75px;text-align:right;font-size:10px;color:#1a1a1a;">25.78</div>
<div class="t" style="left:380px;top:262.95px;width:43.000000000000014px;height:15.75px;line-height:15.75px;text-align:right;font-size:10px;color:#1a1a1a;">-0.03</div>
<div class="t" style="left:425.3px;top:262.95px;width:43.09999999999998px;height:15.75px;line-height:15.75px;text-align:right;font-size:10px;color:#1a1a1a;">33.18</div>
<div style="position:absolute;left:289.3px;top:277.5px;width:332.99999999999994px;height:15.75px;background:#a8c0df;"></div>
<div class="t" style="left:289.3px;top:278.7px;width:42.7px;height:15.75px;line-height:15.75px;text-align:right;font-size:10px;color:#1a1a1a;color:#f0222e;">2.665</div>
<div class="t" style="left:334.3px;top:278.7px;width:43.39999999999999px;height:15.75px;line-height:15.75px;text-align:right;font-size:10px;color:#1a1a1a;">36.33</div>
<div class="t" style="left:380px;top:278.7px;width:43.000000000000014px;height:15.75px;line-height:15.75px;text-align:right;font-size:10px;color:#1a1a1a;">-0.04</div>
<div class="t" style="left:425.3px;top:278.7px;width:43.09999999999998px;height:15.75px;line-height:15.75px;text-align:right;font-size:10px;color:#1a1a1a;">38.56</div>
<div style="position:absolute;left:289.3px;top:293.25px;width:332.99999999999994px;height:15.75px;background:#a8c0df;"></div>
<div class="t" style="left:289.3px;top:294.45px;width:42.7px;height:15.75px;line-height:15.75px;text-align:right;font-size:10px;color:#1a1a1a;color:#22922e;">3.60</div>
<div class="t" style="left:334.3px;top:294.45px;width:43.39999999999999px;height:15.75px;line-height:15.75px;text-align:right;font-size:10px;color:#1a1a1a;">54.67</div>
<div class="t" style="left:380px;top:294.45px;width:43.000000000000014px;height:15.75px;line-height:15.75px;text-align:right;font-size:10px;color:#1a1a1a;">-0.03</div>
<div class="t" style="left:425.3px;top:294.45px;width:43.09999999999998px;height:15.75px;line-height:15.75px;text-align:right;font-size:10px;color:#1a1a1a;">40.68</div>
<div style="position:absolute;left:289.3px;top:309.0px;width:332.99999999999994px;height:15.75px;background:#a8c0df;"></div>
<div class="t" style="left:289.3px;top:310.2px;width:42.7px;height:15.75px;line-height:15.75px;text-align:right;font-size:10px;color:#1a1a1a;color:#22922e;">4.75</div>
<div class="t" style="left:334.3px;top:310.2px;width:43.39999999999999px;height:15.75px;line-height:15.75px;text-align:right;font-size:10px;color:#1a1a1a;">99.99</div>
<div class="t" style="left:380px;top:310.2px;width:43.000000000000014px;height:15.75px;line-height:15.75px;text-align:right;font-size:10px;color:#1a1a1a;">-0.09</div>
<div class="t" style="left:425.3px;top:310.2px;width:43.09999999999998px;height:15.75px;line-height:15.75px;text-align:right;font-size:10px;color:#1a1a1a;">39.57</div>
<div style="position:absolute;left:289.3px;top:324.75px;width:332.99999999999994px;height:15.75px;background:#a8c0df;"></div>
<div class="t" style="left:289.3px;top:325.95px;width:42.7px;height:15.75px;line-height:15.75px;text-align:right;font-size:10px;color:#1a1a1a;color:#22922e;">6.20</div>
<div class="t" style="left:334.3px;top:325.95px;width:43.39999999999999px;height:15.75px;line-height:15.75px;text-align:right;font-size:10px;color:#1a1a1a;">99.99</div>
<div class="t" style="left:380px;top:325.95px;width:43.000000000000014px;height:15.75px;line-height:15.75px;text-align:right;font-size:10px;color:#1a1a1a;">-0.09</div>
<div class="t" style="left:425.3px;top:325.95px;width:43.09999999999998px;height:15.75px;line-height:15.75px;text-align:right;font-size:10px;color:#1a1a1a;">37.39</div>
<div style="position:absolute;left:289.3px;top:340.5px;width:332.99999999999994px;height:15.75px;background:#a8c0df;"></div>
<div class="t" style="left:289.3px;top:341.7px;width:42.7px;height:15.75px;line-height:15.75px;text-align:right;font-size:10px;color:#1a1a1a;color:#22922e;">7.95</div>
<div class="t" style="left:334.3px;top:341.7px;width:43.39999999999999px;height:15.75px;line-height:15.75px;text-align:right;font-size:10px;color:#1a1a1a;">99.99</div>
<div class="t" style="left:380px;top:341.7px;width:43.000000000000014px;height:15.75px;line-height:15.75px;text-align:right;font-size:10px;color:#1a1a1a;">-0.08</div>
<div class="t" style="left:425.3px;top:341.7px;width:43.09999999999998px;height:15.75px;line-height:15.75px;text-align:right;font-size:10px;color:#1a1a1a;">34.56</div>
<div style="position:absolute;left:289.3px;top:356.25px;width:332.99999999999994px;height:15.75px;background:#a8c0df;"></div>
<div class="t" style="left:289.3px;top:357.45px;width:42.7px;height:15.75px;line-height:15.75px;text-align:right;font-size:10px;color:#1a1a1a;color:#22922e;">9.975</div>
<div class="t" style="left:334.3px;top:357.45px;width:43.39999999999999px;height:15.75px;line-height:15.75px;text-align:right;font-size:10px;color:#1a1a1a;">99.99</div>
<div class="t" style="left:380px;top:357.45px;width:43.000000000000014px;height:15.75px;line-height:15.75px;text-align:right;font-size:10px;color:#1a1a1a;">-0.08</div>
<div class="t" style="left:425.3px;top:357.45px;width:43.09999999999998px;height:15.75px;line-height:15.75px;text-align:right;font-size:10px;color:#1a1a1a;">31.27</div>
<div style="position:absolute;left:289.3px;top:372.0px;width:332.99999999999994px;height:15.75px;background:#a8c0df;"></div>
<div class="t" style="left:289.3px;top:373.2px;width:42.7px;height:15.75px;line-height:15.75px;text-align:right;font-size:10px;color:#1a1a1a;color:#22922e;">12.30</div>
<div class="t" style="left:334.3px;top:373.2px;width:43.39999999999999px;height:15.75px;line-height:15.75px;text-align:right;font-size:10px;color:#1a1a1a;">99.99</div>
<div class="t" style="left:380px;top:373.2px;width:43.000000000000014px;height:15.75px;line-height:15.75px;text-align:right;font-size:10px;color:#1a1a1a;">-0.08</div>
<div class="t" style="left:425.3px;top:373.2px;width:43.09999999999998px;height:15.75px;line-height:15.75px;text-align:right;font-size:10px;color:#1a1a1a;">27.82</div>
<div style="position:absolute;left:289.3px;top:387.75px;width:332.99999999999994px;height:12.75px;background:#c6e5ec;"></div>
<div class="t" style="left:289.3px;top:388.95px;width:42.7px;height:15.75px;line-height:15.75px;text-align:right;font-size:10px;color:#1a1a1a;color:#22922e;">14.925</div>
<div class="t" style="left:334.3px;top:388.95px;width:43.39999999999999px;height:15.75px;line-height:15.75px;text-align:right;font-size:10px;color:#1a1a1a;">99.99</div>
<div class="t" style="left:380px;top:388.95px;width:43.000000000000014px;height:15.75px;line-height:15.75px;text-align:right;font-size:10px;color:#1a1a1a;">-0.07</div>
<div class="t" style="left:425.3px;top:388.95px;width:43.09999999999998px;height:15.75px;line-height:15.75px;text-align:right;font-size:10px;color:#1a1a1a;">24.43</div>
<div style="position:absolute;left:289.3px;top:245px;width:332.99999999999994px;height:1px;background:#d3d8e3;"></div>
<div style="position:absolute;left:289.3px;top:261.25px;width:332.99999999999994px;height:1px;background:#d3d8e3;opacity:0.85;"></div>
<div style="position:absolute;left:289.3px;top:277.0px;width:332.99999999999994px;height:1px;background:#d3d8e3;opacity:0.85;"></div>
<div style="position:absolute;left:289.3px;top:292.75px;width:332.99999999999994px;height:1px;background:#d3d8e3;opacity:0.85;"></div>
<div style="position:absolute;left:289.3px;top:308.5px;width:332.99999999999994px;height:1px;background:#d3d8e3;opacity:0.85;"></div>
<div style="position:absolute;left:289.3px;top:324.25px;width:332.99999999999994px;height:1px;background:#d3d8e3;opacity:0.85;"></div>
<div style="position:absolute;left:289.3px;top:340.0px;width:332.99999999999994px;height:1px;background:#d3d8e3;opacity:0.85;"></div>
<div style="position:absolute;left:289.3px;top:355.75px;width:332.99999999999994px;height:1px;background:#d3d8e3;opacity:0.85;"></div>
<div style="position:absolute;left:289.3px;top:371.5px;width:332.99999999999994px;height:1px;background:#d3d8e3;opacity:0.85;"></div>
<div style="position:absolute;left:289.3px;top:387.25px;width:332.99999999999994px;height:1px;background:#d3d8e3;opacity:0.85;"></div>
<div style="position:absolute;left:333.8px;top:228px;width:1px;height:172.5px;background:#d3d8e3;"></div>
<div style="position:absolute;left:379.5px;top:228px;width:1px;height:172.5px;background:#d3d8e3;"></div>
<div style="position:absolute;left:424.8px;top:228px;width:1px;height:172.5px;background:#d3d8e3;"></div>
<div style="position:absolute;left:470.2px;top:228px;width:1px;height:172.5px;background:#d3d8e3;"></div>
<div style="position:absolute;left:515.5px;top:228px;width:1px;height:172.5px;background:#d3d8e3;"></div>
<div style="position:absolute;left:561.2px;top:228px;width:1px;height:172.5px;background:#d3d8e3;"></div>
<div style="position:absolute;left:607.8px;top:228px;width:1px;height:172.5px;background:#d3d8e3;"></div>
<div style="position:absolute;left:608.3px;top:246px;width:14.5px;height:154.5px;background:#d9dfe9;"></div>
<div style="position:absolute;left:611px;top:316.5px;width:9px;height:15px;background:#a9b0bd;"></div>
<svg style="position:absolute;left:611.5px;top:250.5px" width="8" height="5"><path d="M0.5 4.5 L4 0.5 L7.5 4.5Z" fill="#6a7282"/></svg>
<svg style="position:absolute;left:611.5px;top:392.5px" width="8" height="5"><path d="M0.5 0.5 L4 4.5 L7.5 0.5Z" fill="#6a7282"/></svg>
<div style="position:absolute;left:289px;top:210px;width:333.8px;height:191.5px;border:1px solid #b4bccb;box-sizing:border-box;"></div>
<svg style="position:absolute;left:253px;top:405.5px" width="13" height="4"><g fill="#aab2c4"><rect x="0" y="0" width="1" height="1"/><rect x="0" y="1" width="0" height="1"/><rect x="1" y="2" width="1" height="1"/><rect x="1" y="1" width="1" height="1"/><rect x="2" y="0" width="1" height="1"/><rect x="2" y="1" width="0" height="1"/><rect x="3" y="2" width="1" height="1"/><rect x="3" y="1" width="1" height="1"/><rect x="4" y="0" width="1" height="1"/><rect x="4" y="1" width="0" height="1"/><rect x="5" y="2" width="1" height="1"/><rect x="5" y="1" width="1" height="1"/><rect x="6" y="0" width="1" height="1"/><rect x="6" y="1" width="0" height="1"/><rect x="7" y="2" width="1" height="1"/><rect x="7" y="1" width="1" height="1"/><rect x="8" y="0" width="1" height="1"/><rect x="8" y="1" width="0" height="1"/><rect x="9" y="2" width="1" height="1"/><rect x="9" y="1" width="1" height="1"/><rect x="10" y="0" width="1" height="1"/><rect x="10" y="1" width="0" height="1"/><rect x="11" y="2" width="1" height="1"/><rect x="11" y="1" width="1" height="1"/></g></svg>
<svg style="position:absolute;left:628px;top:401.5px" width="5" height="13"><g fill="#a4acbe"><rect x="0" y="0" width="1" height="1"/><rect x="3" y="0" width="1" height="1"/><rect x="2" y="1" width="1" height="1"/><rect x="1" y="1" width="1" height="1"/><rect x="0" y="2" width="1" height="1"/><rect x="3" y="2" width="1" height="1"/><rect x="2" y="3" width="1" height="1"/><rect x="1" y="3" width="1" height="1"/><rect x="0" y="4" width="1" height="1"/><rect x="3" y="4" width="1" height="1"/><rect x="2" y="5" width="1" height="1"/><rect x="1" y="5" width="1" height="1"/><rect x="0" y="6" width="1" height="1"/><rect x="3" y="6" width="1" height="1"/><rect x="2" y="7" width="1" height="1"/><rect x="1" y="7" width="1" height="1"/><rect x="0" y="8" width="1" height="1"/><rect x="3" y="8" width="1" height="1"/><rect x="2" y="9" width="1" height="1"/><rect x="1" y="9" width="1" height="1"/><rect x="0" y="10" width="1" height="1"/><rect x="3" y="10" width="1" height="1"/><rect x="2" y="11" width="1" height="1"/><rect x="1" y="11" width="1" height="1"/></g></svg>
<div style="position:absolute;left:-1px;top:412px;width:286.8px;height:181px;background:#fff;"></div>
<div style="position:absolute;left:0px;top:412.4px;width:285.3px;height:17.8px;background:#f5f6fa;"></div>
<div class="t" style="left:0px;top:412.9px;width:47.4px;height:17.8px;line-height:17.8px;text-align:center;font-size:10px;color:#3a4252;">Delta</div>
<div class="t" style="left:47.4px;top:412.9px;width:47.4px;height:17.8px;line-height:17.8px;text-align:center;font-size:10px;color:#3a4252;">Theta</div>
<div class="t" style="left:94.8px;top:412.9px;width:47.39999999999999px;height:17.8px;line-height:17.8px;text-align:center;font-size:10px;color:#3a4252;">Vega</div>
<div class="t" style="left:146.80px;top:412.90px;height:17.8px;line-height:17.8px;font-size:10px;color:#3a4252;transform:scaleX(0.9167);transform-origin:0 0;">OrigPrice</div>
<div class="t" style="left:189.6px;top:412.9px;width:47.400000000000006px;height:17.8px;line-height:17.8px;text-align:center;font-size:10px;color:#3a4252;">Model</div>
<div class="t" style="left:237px;top:412.9px;width:48.30000000000001px;height:17.8px;line-height:17.8px;text-align:center;font-size:10px;color:#3a4252;">Pos</div>
<div style="position:absolute;left:0px;top:430.2px;width:285.3px;height:15.75px;background:#c6e5ec;"></div>
<div class="t" style="left:0px;top:431.4px;width:45.1px;height:15.75px;line-height:15.75px;text-align:right;font-size:10px;color:#1a1a1a;">-29.50</div>
<div class="t" style="left:47.4px;top:431.4px;width:45.1px;height:15.75px;line-height:15.75px;text-align:right;font-size:10px;color:#1a1a1a;">-0.27</div>
<div class="t" style="left:94.8px;top:431.4px;width:45.099999999999994px;height:15.75px;line-height:15.75px;text-align:right;font-size:10px;color:#1a1a1a;">26.19</div>
<div class="t" style="left:142.2px;top:431.4px;width:45.10000000000001px;height:15.75px;line-height:15.75px;text-align:right;font-size:10px;color:#1a1a1a;">7.28</div>
<div class="t" style="left:237px;top:431.4px;width:46.000000000000014px;height:15.75px;line-height:15.75px;text-align:right;font-size:10px;color:#1a1a1a;">-3</div>
<div style="position:absolute;left:0px;top:445.95px;width:285.3px;height:15.75px;background:#c6e5ec;"></div>
<div class="t" style="left:0px;top:447.15px;width:45.1px;height:15.75px;line-height:15.75px;text-align:right;font-size:10px;color:#1a1a1a;">-26.47</div>
<div class="t" style="left:47.4px;top:447.15px;width:45.1px;height:15.75px;line-height:15.75px;text-align:right;font-size:10px;color:#1a1a1a;">-0.25</div>
<div class="t" style="left:94.8px;top:447.15px;width:45.099999999999994px;height:15.75px;line-height:15.75px;text-align:right;font-size:10px;color:#1a1a1a;">24.85</div>
<div style="position:absolute;left:0px;top:461.7px;width:285.3px;height:15.75px;background:#d2d2d2;"></div>
<div class="t" style="left:0px;top:462.9px;width:45.1px;height:15.75px;line-height:15.75px;text-align:right;font-size:10px;color:#1a1a1a;">-23.45</div>
<div class="t" style="left:47.4px;top:462.9px;width:45.1px;height:15.75px;line-height:15.75px;text-align:right;font-size:10px;color:#1a1a1a;">-0.23</div>
<div class="t" style="left:94.8px;top:462.9px;width:45.099999999999994px;height:15.75px;line-height:15.75px;text-align:right;font-size:10px;color:#1a1a1a;">23.30</div>
<div class="t" style="left:142.2px;top:462.9px;width:45.10000000000001px;height:15.75px;line-height:15.75px;text-align:right;font-size:10px;color:#1a1a1a;">4.45</div>
<div class="t" style="left:189.6px;top:462.9px;width:45.10000000000001px;height:15.75px;line-height:15.75px;text-align:right;font-size:10px;color:#1a1a1a;">-1</div>
<div class="t" style="left:237px;top:462.9px;width:46.000000000000014px;height:15.75px;line-height:15.75px;text-align:right;font-size:10px;color:#1a1a1a;">+5</div>
<div style="position:absolute;left:0px;top:477.45px;width:285.3px;height:15.75px;background:#fffbea;"></div>
<div class="t" style="left:0px;top:478.65px;width:45.1px;height:15.75px;line-height:15.75px;text-align:right;font-size:10px;color:#1a1a1a;">-20.56</div>
<div class="t" style="left:47.4px;top:478.65px;width:45.1px;height:15.75px;line-height:15.75px;text-align:right;font-size:10px;color:#1a1a1a;">-0.21</div>
<div class="t" style="left:94.8px;top:478.65px;width:45.099999999999994px;height:15.75px;line-height:15.75px;text-align:right;font-size:10px;color:#1a1a1a;">21.60</div>
<div style="position:absolute;left:189.6px;top:477.45px;width:47.400000000000006px;height:15.75px;background:#fcefb6;"></div>
<div style="position:absolute;left:0px;top:493.2px;width:285.3px;height:15.75px;background:#c6e5ec;"></div>
<div class="t" style="left:0px;top:494.4px;width:45.1px;height:15.75px;line-height:15.75px;text-align:right;font-size:10px;color:#1a1a1a;">-17.79</div>
<div class="t" style="left:47.4px;top:494.4px;width:45.1px;height:15.75px;line-height:15.75px;text-align:right;font-size:10px;color:#1a1a1a;">-0.19</div>
<div class="t" style="left:94.8px;top:494.4px;width:45.099999999999994px;height:15.75px;line-height:15.75px;text-align:right;font-size:10px;color:#1a1a1a;">19.77</div>
<div style="position:absolute;left:0px;top:508.95px;width:285.3px;height:15.75px;background:#ffffff;"></div>
<div class="t" style="left:0px;top:510.15px;width:45.1px;height:15.75px;line-height:15.75px;text-align:right;font-size:10px;color:#1a1a1a;">-15.25</div>
<div class="t" style="left:47.4px;top:510.15px;width:45.1px;height:15.75px;line-height:15.75px;text-align:right;font-size:10px;color:#1a1a1a;">-0.17</div>
<div class="t" style="left:94.8px;top:510.15px;width:45.099999999999994px;height:15.75px;line-height:15.75px;text-align:right;font-size:10px;color:#1a1a1a;">17.90</div>
<div style="position:absolute;left:0px;top:524.7px;width:285.3px;height:15.75px;background:#ffffff;"></div>
<div class="t" style="left:0px;top:525.9000000000001px;width:45.1px;height:15.75px;line-height:15.75px;text-align:right;font-size:10px;color:#1a1a1a;">-12.93</div>
<div class="t" style="left:47.4px;top:525.9000000000001px;width:45.1px;height:15.75px;line-height:15.75px;text-align:right;font-size:10px;color:#1a1a1a;">-0.16</div>
<div class="t" style="left:94.8px;top:525.9000000000001px;width:45.099999999999994px;height:15.75px;line-height:15.75px;text-align:right;font-size:10px;color:#1a1a1a;">16.00</div>
<div style="position:absolute;left:0px;top:540.45px;width:285.3px;height:15.75px;background:#ffffff;"></div>
<div class="t" style="left:0px;top:541.6500000000001px;width:45.1px;height:15.75px;line-height:15.75px;text-align:right;font-size:10px;color:#1a1a1a;">-10.87</div>
<div class="t" style="left:47.4px;top:541.6500000000001px;width:45.1px;height:15.75px;line-height:15.75px;text-align:right;font-size:10px;color:#1a1a1a;">-0.14</div>
<div class="t" style="left:94.8px;top:541.6500000000001px;width:45.099999999999994px;height:15.75px;line-height:15.75px;text-align:right;font-size:10px;color:#1a1a1a;">14.15</div>
<div style="position:absolute;left:0px;top:556.2px;width:285.3px;height:15.75px;background:#ffffff;"></div>
<div class="t" style="left:0px;top:557.4000000000001px;width:45.1px;height:15.75px;line-height:15.75px;text-align:right;font-size:10px;color:#1a1a1a;">-9.07</div>
<div class="t" style="left:47.4px;top:557.4000000000001px;width:45.1px;height:15.75px;line-height:15.75px;text-align:right;font-size:10px;color:#1a1a1a;">-0.12</div>
<div class="t" style="left:94.8px;top:557.4000000000001px;width:45.099999999999994px;height:15.75px;line-height:15.75px;text-align:right;font-size:10px;color:#1a1a1a;">12.40</div>
<div style="position:absolute;left:0px;top:571.95px;width:285.3px;height:15.75px;background:#ffffff;"></div>
<div class="t" style="left:0px;top:573.1500000000001px;width:45.1px;height:15.75px;line-height:15.75px;text-align:right;font-size:10px;color:#1a1a1a;">-7.51</div>
<div class="t" style="left:47.4px;top:573.1500000000001px;width:45.1px;height:15.75px;line-height:15.75px;text-align:right;font-size:10px;color:#1a1a1a;">-0.11</div>
<div class="t" style="left:94.8px;top:573.1500000000001px;width:45.099999999999994px;height:15.75px;line-height:15.75px;text-align:right;font-size:10px;color:#1a1a1a;">10.75</div>
<div style="position:absolute;left:0px;top:587.7px;width:285.3px;height:4.7999999999999545px;background:#ffffff;"></div>
<div style="position:absolute;left:0px;top:429.2px;width:285.3px;height:1px;background:#d3d8e3;"></div>
<div style="position:absolute;left:0px;top:445.45px;width:285.3px;height:1px;background:#d3d8e3;opacity:0.85;"></div>
<div style="position:absolute;left:0px;top:461.2px;width:285.3px;height:1px;background:#d3d8e3;opacity:0.85;"></div>
<div style="position:absolute;left:0px;top:476.95px;width:285.3px;height:1px;background:#d3d8e3;opacity:0.85;"></div>
<div style="position:absolute;left:0px;top:492.7px;width:285.3px;height:1px;background:#d3d8e3;opacity:0.85;"></div>
<div style="position:absolute;left:0px;top:508.45px;width:285.3px;height:1px;background:#d3d8e3;opacity:0.85;"></div>
<div style="position:absolute;left:0px;top:524.2px;width:285.3px;height:1px;background:#d3d8e3;opacity:0.85;"></div>
<div style="position:absolute;left:0px;top:539.95px;width:285.3px;height:1px;background:#d3d8e3;opacity:0.85;"></div>
<div style="position:absolute;left:0px;top:555.7px;width:285.3px;height:1px;background:#d3d8e3;opacity:0.85;"></div>
<div style="position:absolute;left:0px;top:571.45px;width:285.3px;height:1px;background:#d3d8e3;opacity:0.85;"></div>
<div style="position:absolute;left:0px;top:587.2px;width:285.3px;height:1px;background:#d3d8e3;opacity:0.85;"></div>
<div style="position:absolute;left:46.9px;top:412.4px;width:1px;height:180.10000000000002px;background:#d3d8e3;"></div>
<div style="position:absolute;left:94.3px;top:412.4px;width:1px;height:180.10000000000002px;background:#d3d8e3;"></div>
<div style="position:absolute;left:141.7px;top:412.4px;width:1px;height:180.10000000000002px;background:#d3d8e3;"></div>
<div style="position:absolute;left:189.1px;top:412.4px;width:1px;height:180.10000000000002px;background:#d3d8e3;"></div>
<div style="position:absolute;left:236.5px;top:412.4px;width:1px;height:180.10000000000002px;background:#d3d8e3;"></div>
<div style="position:absolute;left:233.5px;top:481px;width:1px;height:11px;background:#111;"></div>
<div style="position:absolute;left:-1px;top:412px;width:286.8px;height:181px;border:1px solid #b4bccb;box-sizing:border-box;"></div>
<div style="position:absolute;left:289px;top:412px;width:333.3px;height:181px;background:#fff;"></div>
<div style="position:absolute;left:289.3px;top:412.4px;width:332.99999999999994px;height:17.8px;background:#f5f6fa;"></div>
<div class="t" style="left:289.3px;top:412.9px;width:45.0px;height:17.8px;line-height:17.8px;text-align:center;font-size:10px;color:#3a4252;">Mid</div>
<div class="t" style="left:334.3px;top:412.9px;width:45.69999999999999px;height:17.8px;line-height:17.8px;text-align:center;font-size:10px;color:#3a4252;">Delta</div>
<div class="t" style="left:380px;top:412.9px;width:45.30000000000001px;height:17.8px;line-height:17.8px;text-align:center;font-size:10px;color:#3a4252;">Theta</div>
<div class="t" style="left:425.3px;top:412.9px;width:45.39999999999998px;height:17.8px;line-height:17.8px;text-align:center;font-size:10px;color:#3a4252;">Vega</div>
<div class="t" style="left:474.25px;top:412.90px;height:17.8px;line-height:17.8px;font-size:10px;color:#3a4252;transform:scaleX(0.9167);transform-origin:0 0;">OrigPrice</div>
<div class="t" style="left:516px;top:412.9px;width:45.700000000000045px;height:17.8px;line-height:17.8px;text-align:center;font-size:10px;color:#3a4252;">Model</div>
<div class="t" style="left:561.7px;top:412.9px;width:46.59999999999991px;height:17.8px;line-height:17.8px;text-align:center;font-size:10px;color:#3a4252;">Pos</div>
<div class="t" style="left:608.3px;top:412.9px;width:14.0px;height:17.8px;line-height:17.8px;text-align:center;font-size:10px;color:#3a4252;"></div>
<div style="position:absolute;left:289.3px;top:430.2px;width:332.99999999999994px;height:15.75px;background:#a8c0df;"></div>
<div class="t" style="left:289.3px;top:431.4px;width:42.7px;height:15.75px;line-height:15.75px;text-align:right;font-size:10px;color:#1a1a1a;color:#f0222e;">16.975</div>
<div class="t" style="left:334.3px;top:431.4px;width:43.39999999999999px;height:15.75px;line-height:15.75px;text-align:right;font-size:10px;color:#1a1a1a;">-29.76</div>
<div class="t" style="left:380px;top:431.4px;width:43.000000000000014px;height:15.75px;line-height:15.75px;text-align:right;font-size:10px;color:#1a1a1a;">-0.16</div>
<div class="t" style="left:425.3px;top:431.4px;width:43.09999999999998px;height:15.75px;line-height:15.75px;text-align:right;font-size:10px;color:#1a1a1a;">35.59</div>
<div style="position:absolute;left:289.3px;top:445.95px;width:332.99999999999994px;height:15.75px;background:#c6e5ec;"></div>
<div class="t" style="left:289.3px;top:447.15px;width:42.7px;height:15.75px;line-height:15.75px;text-align:right;font-size:10px;color:#1a1a1a;color:#f0222e;">14.575</div>
<div class="t" style="left:334.3px;top:447.15px;width:43.39999999999999px;height:15.75px;line-height:15.75px;text-align:right;font-size:10px;color:#1a1a1a;">-27.04</div>
<div class="t" style="left:380px;top:447.15px;width:43.000000000000014px;height:15.75px;line-height:15.75px;text-align:right;font-size:10px;color:#1a1a1a;">-0.15</div>
<div class="t" style="left:425.3px;top:447.15px;width:43.09999999999998px;height:15.75px;line-height:15.75px;text-align:right;font-size:10px;color:#1a1a1a;">34.00</div>
<div style="position:absolute;left:289.3px;top:461.7px;width:332.99999999999994px;height:15.75px;background:#d2d2d2;"></div>
<div class="t" style="left:289.3px;top:462.9px;width:42.7px;height:15.75px;line-height:15.75px;text-align:right;font-size:10px;color:#1a1a1a;color:#f0222e;">12.45</div>
<div class="t" style="left:334.3px;top:462.9px;width:43.39999999999999px;height:15.75px;line-height:15.75px;text-align:right;font-size:10px;color:#1a1a1a;">-24.36</div>
<div class="t" style="left:380px;top:462.9px;width:43.000000000000014px;height:15.75px;line-height:15.75px;text-align:right;font-size:10px;color:#1a1a1a;">-0.14</div>
<div class="t" style="left:425.3px;top:462.9px;width:43.09999999999998px;height:15.75px;line-height:15.75px;text-align:right;font-size:10px;color:#1a1a1a;">32.20</div>
<div style="position:absolute;left:289.3px;top:477.45px;width:332.99999999999994px;height:15.75px;background:#fffbea;"></div>
<div class="t" style="left:289.3px;top:478.65px;width:42.7px;height:15.75px;line-height:15.75px;text-align:right;font-size:10px;color:#1a1a1a;color:#f0222e;">10.60</div>
<div class="t" style="left:334.3px;top:478.65px;width:43.39999999999999px;height:15.75px;line-height:15.75px;text-align:right;font-size:10px;color:#1a1a1a;">-21.76</div>
<div class="t" style="left:380px;top:478.65px;width:43.000000000000014px;height:15.75px;line-height:15.75px;text-align:right;font-size:10px;color:#1a1a1a;">-0.13</div>
<div class="t" style="left:425.3px;top:478.65px;width:43.09999999999998px;height:15.75px;line-height:15.75px;text-align:right;font-size:10px;color:#1a1a1a;">30.23</div>
<div style="position:absolute;left:289.3px;top:493.2px;width:332.99999999999994px;height:15.75px;background:#c6e5ec;"></div>
<div class="t" style="left:289.3px;top:494.4px;width:42.7px;height:15.75px;line-height:15.75px;text-align:right;font-size:10px;color:#1a1a1a;color:#f0222e;">8.925</div>
<div class="t" style="left:334.3px;top:494.4px;width:43.39999999999999px;height:15.75px;line-height:15.75px;text-align:right;font-size:10px;color:#1a1a1a;">-19.23</div>
<div class="t" style="left:380px;top:494.4px;width:43.000000000000014px;height:15.75px;line-height:15.75px;text-align:right;font-size:10px;color:#1a1a1a;">-0.12</div>
<div class="t" style="left:425.3px;top:494.4px;width:43.09999999999998px;height:15.75px;line-height:15.75px;text-align:right;font-size:10px;color:#1a1a1a;">28.09</div>
<div style="position:absolute;left:289.3px;top:508.95px;width:332.99999999999994px;height:15.75px;background:#c6e5ec;"></div>
<div class="t" style="left:289.3px;top:510.15px;width:42.7px;height:15.75px;line-height:15.75px;text-align:right;font-size:10px;color:#1a1a1a;color:#f0222e;">7.50</div>
<div class="t" style="left:334.3px;top:510.15px;width:43.39999999999999px;height:15.75px;line-height:15.75px;text-align:right;font-size:10px;color:#1a1a1a;">-16.87</div>
<div class="t" style="left:380px;top:510.15px;width:43.000000000000014px;height:15.75px;line-height:15.75px;text-align:right;font-size:10px;color:#1a1a1a;">-0.11</div>
<div class="t" style="left:425.3px;top:510.15px;width:43.09999999999998px;height:15.75px;line-height:15.75px;text-align:right;font-size:10px;color:#1a1a1a;">25.87</div>
<div style="position:absolute;left:289.3px;top:524.7px;width:332.99999999999994px;height:15.75px;background:#c6e5ec;"></div>
<div class="t" style="left:289.3px;top:525.9000000000001px;width:42.7px;height:15.75px;line-height:15.75px;text-align:right;font-size:10px;color:#1a1a1a;color:#f0222e;">6.275</div>
<div class="t" style="left:334.3px;top:525.9000000000001px;width:43.39999999999999px;height:15.75px;line-height:15.75px;text-align:right;font-size:10px;color:#1a1a1a;">-14.68</div>
<div class="t" style="left:380px;top:525.9000000000001px;width:43.000000000000014px;height:15.75px;line-height:15.75px;text-align:right;font-size:10px;color:#1a1a1a;">-0.10</div>
<div class="t" style="left:425.3px;top:525.9000000000001px;width:43.09999999999998px;height:15.75px;line-height:15.75px;text-align:right;font-size:10px;color:#1a1a1a;">23.61</div>
<div style="position:absolute;left:289.3px;top:540.45px;width:332.99999999999994px;height:15.75px;background:#ffffff;"></div>
<div class="t" style="left:289.3px;top:541.6500000000001px;width:42.7px;height:15.75px;line-height:15.75px;text-align:right;font-size:10px;color:#1a1a1a;color:#f0222e;">5.225</div>
<div class="t" style="left:334.3px;top:541.6500000000001px;width:43.39999999999999px;height:15.75px;line-height:15.75px;text-align:right;font-size:10px;color:#1a1a1a;">-12.67</div>
<div class="t" style="left:380px;top:541.6500000000001px;width:43.000000000000014px;height:15.75px;line-height:15.75px;text-align:right;font-size:10px;color:#1a1a1a;">-0.09</div>
<div class="t" style="left:425.3px;top:541.6500000000001px;width:43.09999999999998px;height:15.75px;line-height:15.75px;text-align:right;font-size:10px;color:#1a1a1a;">21.35</div>
<div style="position:absolute;left:289.3px;top:556.2px;width:332.99999999999994px;height:15.75px;background:#ffffff;"></div>
<div class="t" style="left:289.3px;top:557.4000000000001px;width:42.7px;height:15.75px;line-height:15.75px;text-align:right;font-size:10px;color:#1a1a1a;color:#f0222e;">4.325</div>
<div class="t" style="left:334.3px;top:557.4000000000001px;width:43.39999999999999px;height:15.75px;line-height:15.75px;text-align:right;font-size:10px;color:#1a1a1a;">-10.84</div>
<div class="t" style="left:380px;top:557.4000000000001px;width:43.000000000000014px;height:15.75px;line-height:15.75px;text-align:right;font-size:10px;color:#1a1a1a;">-0.08</div>
<div class="t" style="left:425.3px;top:557.4000000000001px;width:43.09999999999998px;height:15.75px;line-height:15.75px;text-align:right;font-size:10px;color:#1a1a1a;">19.12</div>
<div style="position:absolute;left:289.3px;top:571.95px;width:332.99999999999994px;height:15.75px;background:#ffffff;"></div>
<div class="t" style="left:289.3px;top:573.1500000000001px;width:42.7px;height:15.75px;line-height:15.75px;text-align:right;font-size:10px;color:#1a1a1a;color:#f0222e;">3.575</div>
<div class="t" style="left:334.3px;top:573.1500000000001px;width:43.39999999999999px;height:15.75px;line-height:15.75px;text-align:right;font-size:10px;color:#1a1a1a;">-9.23</div>
<div class="t" style="left:380px;top:573.1500000000001px;width:43.000000000000014px;height:15.75px;line-height:15.75px;text-align:right;font-size:10px;color:#1a1a1a;">-0.07</div>
<div class="t" style="left:425.3px;top:573.1500000000001px;width:43.09999999999998px;height:15.75px;line-height:15.75px;text-align:right;font-size:10px;color:#1a1a1a;">17.00</div>
<div style="position:absolute;left:289.3px;top:587.7px;width:332.99999999999994px;height:4.7999999999999545px;background:#ffffff;"></div>
<div style="position:absolute;left:289.3px;top:429.2px;width:332.99999999999994px;height:1px;background:#d3d8e3;"></div>
<div style="position:absolute;left:289.3px;top:445.45px;width:332.99999999999994px;height:1px;background:#d3d8e3;opacity:0.85;"></div>
<div style="position:absolute;left:289.3px;top:461.2px;width:332.99999999999994px;height:1px;background:#d3d8e3;opacity:0.85;"></div>
<div style="position:absolute;left:289.3px;top:476.95px;width:332.99999999999994px;height:1px;background:#d3d8e3;opacity:0.85;"></div>
<div style="position:absolute;left:289.3px;top:492.7px;width:332.99999999999994px;height:1px;background:#d3d8e3;opacity:0.85;"></div>
<div style="position:absolute;left:289.3px;top:508.45px;width:332.99999999999994px;height:1px;background:#d3d8e3;opacity:0.85;"></div>
<div style="position:absolute;left:289.3px;top:524.2px;width:332.99999999999994px;height:1px;background:#d3d8e3;opacity:0.85;"></div>
<div style="position:absolute;left:289.3px;top:539.95px;width:332.99999999999994px;height:1px;background:#d3d8e3;opacity:0.85;"></div>
<div style="position:absolute;left:289.3px;top:555.7px;width:332.99999999999994px;height:1px;background:#d3d8e3;opacity:0.85;"></div>
<div style="position:absolute;left:289.3px;top:571.45px;width:332.99999999999994px;height:1px;background:#d3d8e3;opacity:0.85;"></div>
<div style="position:absolute;left:289.3px;top:587.2px;width:332.99999999999994px;height:1px;background:#d3d8e3;opacity:0.85;"></div>
<div style="position:absolute;left:333.8px;top:412.4px;width:1px;height:180.10000000000002px;background:#d3d8e3;"></div>
<div style="position:absolute;left:379.5px;top:412.4px;width:1px;height:180.10000000000002px;background:#d3d8e3;"></div>
<div style="position:absolute;left:424.8px;top:412.4px;width:1px;height:180.10000000000002px;background:#d3d8e3;"></div>
<div style="position:absolute;left:470.2px;top:412.4px;width:1px;height:180.10000000000002px;background:#d3d8e3;"></div>
<div style="position:absolute;left:515.5px;top:412.4px;width:1px;height:180.10000000000002px;background:#d3d8e3;"></div>
<div style="position:absolute;left:561.2px;top:412.4px;width:1px;height:180.10000000000002px;background:#d3d8e3;"></div>
<div style="position:absolute;left:607.8px;top:412.4px;width:1px;height:180.10000000000002px;background:#d3d8e3;"></div>
<div style="position:absolute;left:608.3px;top:430.2px;width:14.5px;height:162.3px;background:#d9dfe9;"></div>
<div style="position:absolute;left:611px;top:516.5px;width:9px;height:15px;background:#a9b0bd;"></div>
<svg style="position:absolute;left:611.5px;top:434.5px" width="8" height="5"><path d="M0.5 4.5 L4 0.5 L7.5 4.5Z" fill="#6a7282"/></svg>
<svg style="position:absolute;left:611.5px;top:584.5px" width="8" height="5"><path d="M0.5 0.5 L4 4.5 L7.5 0.5Z" fill="#6a7282"/></svg>
<div style="position:absolute;left:289px;top:412px;width:333.8px;height:181px;border:1px solid #b4bccb;box-sizing:border-box;"></div>
<svg style="position:absolute;left:253px;top:597.5px" width="13" height="4"><g fill="#aab2c4"><rect x="0" y="0" width="1" height="1"/><rect x="0" y="1" width="0" height="1"/><rect x="1" y="2" width="1" height="1"/><rect x="1" y="1" width="1" height="1"/><rect x="2" y="0" width="1" height="1"/><rect x="2" y="1" width="0" height="1"/><rect x="3" y="2" width="1" height="1"/><rect x="3" y="1" width="1" height="1"/><rect x="4" y="0" width="1" height="1"/><rect x="4" y="1" width="0" height="1"/><rect x="5" y="2" width="1" height="1"/><rect x="5" y="1" width="1" height="1"/><rect x="6" y="0" width="1" height="1"/><rect x="6" y="1" width="0" height="1"/><rect x="7" y="2" width="1" height="1"/><rect x="7" y="1" width="1" height="1"/><rect x="8" y="0" width="1" height="1"/><rect x="8" y="1" width="0" height="1"/><rect x="9" y="2" width="1" height="1"/><rect x="9" y="1" width="1" height="1"/><rect x="10" y="0" width="1" height="1"/><rect x="10" y="1" width="0" height="1"/><rect x="11" y="2" width="1" height="1"/><rect x="11" y="1" width="1" height="1"/></g></svg>
<div style="position:absolute;left:-1px;top:606.3px;width:101.4px;height:16.3px;background:#fff;border:1px solid #b4bccb;box-sizing:border-box;"></div>
<div class="t" style="left:-25.82px;top:609.19px;font-size:11px;line-height:11px;color:#111;transform:scaleX(0.9000);transform-origin:0 0;">Combined</div>
<svg style="position:absolute;left:90.5px;top:612.5px" width="6" height="4"><path d="M0 0.5 L5 0.5 L2.5 3.5Z" fill="#555"/></svg>
<div style="position:absolute;left:107.3px;top:606.3px;width:68.1px;height:16.3px;background:#fff;border:1px solid #b4bccb;box-sizing:border-box;"></div>
<div class="t" style="left:111.10px;top:609.19px;font-size:11px;line-height:11px;color:#111;transform:scaleX(0.8795);transform-origin:0 0;">Auto</div>
<svg style="position:absolute;left:166px;top:612.5px" width="6" height="4"><path d="M0 0.5 L5 0.5 L2.5 3.5Z" fill="#555"/></svg>
<div style="position:absolute;left:506px;top:608.7px;width:10px;height:10px;background:#fff;border:1px solid #9aa2b2;box-sizing:border-box;"></div>
<div class="t" style="left:517.90px;top:608.99px;font-size:11px;line-height:11px;color:#2a3142;transform:scaleX(0.9649);transform-origin:0 0;">Ignore Today&#39;s Trades</div>
<div style="position:absolute;left:-1px;top:625.6px;width:624.4px;height:50px;background:#fff;"></div>
<div style="position:absolute;left:-50px;top:625.6px;width:673.4px;height:18.4px;background:#f5f6fa;"></div>
<div class="t" style="left:-50px;top:626.1px;width:55.9px;height:18.4px;line-height:18.4px;text-align:center;font-size:10px;color:#3a4252;"></div>
<div class="t" style="left:5.9px;top:626.1px;width:55.4px;height:18.4px;line-height:18.4px;text-align:center;font-size:10px;color:#3a4252;">Cost</div>
<div class="t" style="left:61.3px;top:626.1px;width:56.3px;height:18.4px;line-height:18.4px;text-align:center;font-size:10px;color:#3a4252;">Curr Cost</div>
<div class="t" style="left:117.6px;top:626.1px;width:55.70000000000002px;height:18.4px;line-height:18.4px;text-align:center;font-size:10px;color:#3a4252;">Commiss...</div>
<div class="t" style="left:173.3px;top:626.1px;width:54.79999999999998px;height:18.4px;line-height:18.4px;text-align:center;font-size:10px;color:#3a4252;">PnL</div>
<div class="t" style="left:228.1px;top:626.1px;width:56.29999999999998px;height:18.4px;line-height:18.4px;text-align:center;font-size:10px;color:#3a4252;">PnL%</div>
<div class="t" style="left:284.4px;top:626.1px;width:55.900000000000034px;height:18.4px;line-height:18.4px;text-align:center;font-size:10px;color:#3a4252;">Delta</div>
<div class="t" style="left:340.3px;top:626.1px;width:55.69999999999999px;height:18.4px;line-height:18.4px;text-align:center;font-size:10px;color:#3a4252;">Gamma</div>
<div class="t" style="left:396px;top:626.1px;width:55.80000000000001px;height:18.4px;line-height:18.4px;text-align:center;font-size:10px;color:#3a4252;">Theta</div>
<div class="t" style="left:451.8px;top:626.1px;width:55.39999999999998px;height:18.4px;line-height:18.4px;text-align:center;font-size:10px;color:#3a4252;">Vega</div>
<div class="t" style="left:507.2px;top:626.1px;width:55.69999999999999px;height:18.4px;line-height:18.4px;text-align:center;font-size:10px;color:#3a4252;">T/D</div>
<div class="t" style="left:562.9px;top:626.1px;width:60.5px;height:18.4px;line-height:18.4px;text-align:center;font-size:10px;color:#3a4252;">Plot</div>
<div style="position:absolute;left:-50px;top:644.0px;width:673.4px;height:15.7px;background:#ffffff;"></div>
<div class="t" style="left:-50px;top:645.2px;width:53.6px;height:15.7px;line-height:15.7px;text-align:right;font-size:10px;color:#1a1a1a;">0</div>
<div class="t" style="left:5.9px;top:645.2px;width:53.1px;height:15.7px;line-height:15.7px;text-align:right;font-size:10px;color:#1a1a1a;">-129.20</div>
<div class="t" style="left:61.3px;top:645.2px;width:54.0px;height:15.7px;line-height:15.7px;text-align:right;font-size:10px;color:#1a1a1a;">786.50</div>
<div class="t" style="left:117.6px;top:645.2px;width:53.40000000000002px;height:15.7px;line-height:15.7px;text-align:right;font-size:10px;color:#1a1a1a;">7.20</div>
<div class="t" style="left:173.3px;top:645.2px;width:52.499999999999986px;height:15.7px;line-height:15.7px;text-align:right;font-size:10px;color:#1a1a1a;color:#22922e;">657.30</div>
<div class="t" style="left:228.1px;top:645.2px;width:53.999999999999986px;height:15.7px;line-height:15.7px;text-align:right;font-size:10px;color:#1a1a1a;color:#22922e;">21.01%</div>
<div class="t" style="left:284.4px;top:645.2px;width:53.60000000000004px;height:15.7px;line-height:15.7px;text-align:right;font-size:10px;color:#1a1a1a;">-16.80</div>
<div class="t" style="left:340.3px;top:645.2px;width:53.39999999999999px;height:15.7px;line-height:15.7px;text-align:right;font-size:10px;color:#1a1a1a;">2.48</div>
<div style="position:absolute;left:396px;top:644.0px;width:55.80000000000001px;height:15.7px;background:#ff0000;"></div>
<div class="t" style="left:396px;top:645.2px;width:53.500000000000014px;height:15.7px;line-height:15.7px;text-align:right;font-size:10px;color:#1a1a1a;color:#3a0000;">-37.91</div>
<div class="t" style="left:451.8px;top:645.2px;width:53.09999999999998px;height:15.7px;line-height:15.7px;text-align:right;font-size:10px;color:#1a1a1a;">53.04</div>
<div class="t" style="left:507.2px;top:645.2px;width:53.39999999999999px;height:15.7px;line-height:15.7px;text-align:right;font-size:10px;color:#1a1a1a;">-2.3</div>
<div style="position:absolute;left:-50px;top:659.7px;width:673.4px;height:15.7px;background:#ffffff;"></div>
<div class="t" style="left:-50px;top:660.9000000000001px;width:53.6px;height:15.7px;line-height:15.7px;text-align:right;font-size:10px;color:#1a1a1a;">0</div>
<div class="t" style="left:5.9px;top:660.9000000000001px;width:53.1px;height:15.7px;line-height:15.7px;text-align:right;font-size:10px;color:#1a1a1a;">915.00</div>
<div class="t" style="left:61.3px;top:660.9000000000001px;width:54.0px;height:15.7px;line-height:15.7px;text-align:right;font-size:10px;color:#1a1a1a;">-258.50</div>
<div class="t" style="left:117.6px;top:660.9000000000001px;width:53.40000000000002px;height:15.7px;line-height:15.7px;text-align:right;font-size:10px;color:#1a1a1a;">8.00</div>
<div class="t" style="left:173.3px;top:660.9000000000001px;width:52.499999999999986px;height:15.7px;line-height:15.7px;text-align:right;font-size:10px;color:#1a1a1a;color:#22922e;">656.50</div>
<div class="t" style="left:228.1px;top:660.9000000000001px;width:53.999999999999986px;height:15.7px;line-height:15.7px;text-align:right;font-size:10px;color:#1a1a1a;color:#22922e;">31.52%</div>
<div class="t" style="left:284.4px;top:660.9000000000001px;width:53.60000000000004px;height:15.7px;line-height:15.7px;text-align:right;font-size:10px;color:#1a1a1a;">6.65</div>
<div class="t" style="left:340.3px;top:660.9000000000001px;width:53.39999999999999px;height:15.7px;line-height:15.7px;text-align:right;font-size:10px;color:#1a1a1a;">2.01</div>
<div style="position:absolute;left:396px;top:659.7px;width:55.80000000000001px;height:15.7px;background:#ff0000;"></div>
<div class="t" style="left:396px;top:660.9000000000001px;width:53.500000000000014px;height:15.7px;line-height:15.7px;text-align:right;font-size:10px;color:#1a1a1a;color:#3a0000;">-14.71</div>
<div class="t" style="left:451.8px;top:660.9000000000001px;width:53.09999999999998px;height:15.7px;line-height:15.7px;text-align:right;font-size:10px;color:#1a1a1a;">29.74</div>
<div class="t" style="left:507.2px;top:660.9000000000001px;width:53.39999999999999px;height:15.7px;line-height:15.7px;text-align:right;font-size:10px;color:#1a1a1a;">-2.2</div>
<div style="position:absolute;left:-50px;top:643.0px;width:673.4px;height:1px;background:#d3d8e3;"></div>
<div style="position:absolute;left:-50px;top:659.2px;width:673.4px;height:1px;background:#d3d8e3;opacity:0.85;"></div>
<div style="position:absolute;left:-50px;top:674.9px;width:673.4px;height:1px;background:#d3d8e3;opacity:0.85;"></div>
<div style="position:absolute;left:5.4px;top:625.6px;width:1px;height:50.39999999999998px;background:#d3d8e3;"></div>
<div style="position:absolute;left:60.8px;top:625.6px;width:1px;height:50.39999999999998px;background:#d3d8e3;"></div>
<div style="position:absolute;left:117.1px;top:625.6px;width:1px;height:50.39999999999998px;background:#d3d8e3;"></div>
<div style="position:absolute;left:172.8px;top:625.6px;width:1px;height:50.39999999999998px;background:#d3d8e3;"></div>
<div style="position:absolute;left:227.6px;top:625.6px;width:1px;height:50.39999999999998px;background:#d3d8e3;"></div>
<div style="position:absolute;left:283.9px;top:625.6px;width:1px;height:50.39999999999998px;background:#d3d8e3;"></div>
<div style="position:absolute;left:339.8px;top:625.6px;width:1px;height:50.39999999999998px;background:#d3d8e3;"></div>
<div style="position:absolute;left:395.5px;top:625.6px;width:1px;height:50.39999999999998px;background:#d3d8e3;"></div>
<div style="position:absolute;left:451.3px;top:625.6px;width:1px;height:50.39999999999998px;background:#d3d8e3;"></div>
<div style="position:absolute;left:506.7px;top:625.6px;width:1px;height:50.39999999999998px;background:#d3d8e3;"></div>
<div style="position:absolute;left:562.4px;top:625.6px;width:1px;height:50.39999999999998px;background:#d3d8e3;"></div>
<svg style="position:absolute;left:588px;top:647.0px" width="10" height="10"><rect x="0.5" y="0.5" width="9" height="9" rx="1" fill="#f6f7fa" stroke="#a8b0c0"/><path d="M2.2 5 L4.2 7.2 L8 2.6" fill="none" stroke="#5a6478" stroke-width="1.1"/></svg>
<svg style="position:absolute;left:588px;top:662.7px" width="10" height="10"><rect x="0.5" y="0.5" width="9" height="9" rx="1" fill="#f6f7fa" stroke="#a8b0c0"/><path d="M2.2 5 L4.2 7.2 L8 2.6" fill="none" stroke="#5a6478" stroke-width="1.1"/></svg>
<div style="position:absolute;left:-1px;top:625.6px;width:624.4px;height:51px;border:1px solid #b4bccb;box-sizing:border-box;"></div>
<div style="position:absolute;left:635px;top:138px;width:1px;height:516px;background:#b8c0cf;"></div>
<div style="position:absolute;left:636px;top:161px;width:444px;height:1px;background:#b6bece;"></div>
<div style="position:absolute;left:636px;top:139.3px;width:63.799999999999955px;height:22.7px;background:#d8dde9;border:1px solid #b6bece;border-bottom:none;box-sizing:border-box;"></div>
<div style="position:absolute;left:699.8px;top:139.3px;width:66.90000000000009px;height:21.7px;background:#d1d7e3;border:1px solid #b6bece;border-bottom:none;box-sizing:border-box;"></div>
<div style="position:absolute;left:766.7px;top:139.3px;width:106.0px;height:21.7px;background:#d1d7e3;border:1px solid #b6bece;border-bottom:none;box-sizing:border-box;"></div>
<div style="position:absolute;left:872.7px;top:139.3px;width:54.5px;height:21.7px;background:#d1d7e3;border:1px solid #b6bece;border-bottom:none;box-sizing:border-box;"></div>
<div style="position:absolute;left:927.2px;top:139.3px;width:134.39999999999986px;height:21.7px;background:#d1d7e3;border:1px solid #b6bece;border-bottom:none;box-sizing:border-box;"></div>
<div class="t" style="left:640.10px;top:167.09px;font-size:11px;line-height:11px;color:#2a3142;transform:scaleX(0.9273);transform-origin:0 0;">Vol Adjust</div>
<div class="t" style="left:645.60px;top:144.89px;font-size:11px;line-height:11px;color:#2a3142;transform:scaleX(0.8590);transform-origin:0 0;">Risk Chart</div>
<div class="t" style="left:709.40px;top:144.89px;font-size:11px;line-height:11px;color:#2a3142;transform:scaleX(0.8634);transform-origin:0 0;">Price Chart</div>
<div class="t" style="left:776.80px;top:144.89px;font-size:11px;line-height:11px;color:#2a3142;transform:scaleX(0.9097);transform-origin:0 0;">Movement Analysis</div>
<div class="t" style="left:882.40px;top:144.89px;font-size:11px;line-height:11px;color:#2a3142;transform:scaleX(0.8673);transform-origin:0 0;">Volatility</div>
<div class="t" style="left:937.00px;top:144.89px;font-size:11px;line-height:11px;color:#2a3142;transform:scaleX(0.8997);transform-origin:0 0;">Statistics &amp; Fundamentals</div>
<div style="position:absolute;left:689.4px;top:164.2px;width:45px;height:15.6px;background:#fff;border:1px solid #bcc4d2;box-sizing:border-box;"></div>
<div class="t" style="left:712.00px;top:167.09px;font-size:11px;line-height:11px;color:#111;transform:scaleX(0.9809);transform-origin:0 0;">0</div>
<svg style="position:absolute;left:724px;top:165px" width="7" height="14"><path d="M1.1 4.1 L3.6 1.5 L6.1 4.1Z M1.1 9.7 L3.6 12.4 L6.1 9.7Z" fill="#4a5670"/></svg>
<div class="t" style="left:988.00px;top:167.09px;font-size:11px;line-height:11px;color:#2a3142;transform:scaleX(0.8730);transform-origin:0 0;">Projection</div>
<div style="position:absolute;left:1035px;top:164px;width:60px;height:16.3px;background:#fff;border:1px solid #c0c8d6;box-sizing:border-box;"></div>
<div class="t" style="left:1038.50px;top:167.09px;font-size:11px;line-height:11px;color:#111;transform:scaleX(0.9300);transform-origin:0 0;">04/04/2025</div>
<div style="position:absolute;left:636px;top:182.9px;width:444px;height:471.1px;background:#fff;"></div>
<svg style="position:absolute;left:0;top:0" width="1080" height="675" font-family="Liberation Sans, sans-serif"><rect x="867.4" y="198.0" width="96.4" height="276.4" fill="#90cad9"/><rect x="891.7" y="198.0" width="48.6" height="276.4" fill="#4e7fbf"/><line x1="683.3" y1="198.00" x2="1080" y2="198.00" stroke="#dedede" stroke-opacity="0.8" stroke-width="1"/><line x1="683.3" y1="219.26" x2="1080" y2="219.26" stroke="#dedede" stroke-opacity="0.8" stroke-width="1"/><line x1="683.3" y1="240.52" x2="1080" y2="240.52" stroke="#dedede" stroke-opacity="0.8" stroke-width="1"/><line x1="683.3" y1="261.78" x2="1080" y2="261.78" stroke="#dedede" stroke-opacity="0.8" stroke-width="1"/><line x1="683.3" y1="283.05" x2="1080" y2="283.05" stroke="#dedede" stroke-opacity="0.8" stroke-width="1"/><line x1="683.3" y1="304.31" x2="1080" y2="304.31" stroke="#dedede" stroke-opacity="0.8" stroke-width="1"/><line x1="683.3" y1="325.57" x2="1080" y2="325.57" stroke="#dedede" stroke-opacity="0.8" stroke-width="1"/><line x1="683.3" y1="346.83" x2="1080" y2="346.83" stroke="#dedede" stroke-opacity="0.8" stroke-width="1"/><line x1="683.3" y1="368.09" x2="1080" y2="368.09" stroke="#dedede" stroke-opacity="0.8" stroke-width="1"/><line x1="683.3" y1="389.35" x2="1080" y2="389.35" stroke="#dedede" stroke-opacity="0.8" stroke-width="1"/><line x1="683.3" y1="410.62" x2="1080" y2="410.62" stroke="#dedede" stroke-opacity="0.8" stroke-width="1"/><line x1="683.3" y1="431.88" x2="1080" y2="431.88" stroke="#dedede" stroke-opacity="0.8" stroke-width="1"/><line x1="683.3" y1="453.14" x2="1080" y2="453.14" stroke="#dedede" stroke-opacity="0.8" stroke-width="1"/><line x1="683.3" y1="474.40" x2="1080" y2="474.40" stroke="#dedede" stroke-opacity="0.8" stroke-width="1"/><line x1="750.3" y1="198.0" x2="750.3" y2="474.4" stroke="#dedede" stroke-opacity="0.8" stroke-width="1"/><line x1="819.6" y1="198.0" x2="819.6" y2="474.4" stroke="#dedede" stroke-opacity="0.8" stroke-width="1"/><line x1="888.9" y1="198.0" x2="888.9" y2="474.4" stroke="#dedede" stroke-opacity="0.8" stroke-width="1"/><line x1="958.2" y1="198.0" x2="958.2" y2="474.4" stroke="#dedede" stroke-opacity="0.8" stroke-width="1"/><line x1="1027.5" y1="198.0" x2="1027.5" y2="474.4" stroke="#dedede" stroke-opacity="0.8" stroke-width="1"/><line x1="683.3" y1="198.0" x2="683.3" y2="474.4" stroke="#d8d8d8" stroke-width="1"/><text x="661.03" y="202.40" font-size="9.2" fill="#444" textLength="16.57" lengthAdjust="spacingAndGlyphs" >96%</text><text x="661.03" y="223.66" font-size="9.2" fill="#444" textLength="16.57" lengthAdjust="spacingAndGlyphs" >80%</text><text x="661.03" y="244.92" font-size="9.2" fill="#444" textLength="16.57" lengthAdjust="spacingAndGlyphs" >64%</text><text x="661.03" y="266.18" font-size="9.2" fill="#444" textLength="16.57" lengthAdjust="spacingAndGlyphs" >48%</text><text x="661.03" y="287.45" font-size="9.2" fill="#444" textLength="16.57" lengthAdjust="spacingAndGlyphs" >32%</text><text x="661.03" y="308.71" font-size="9.2" fill="#444" textLength="16.57" lengthAdjust="spacingAndGlyphs" >16%</text><text x="665.63" y="329.97" font-size="9.2" fill="#444" textLength="11.97" lengthAdjust="spacingAndGlyphs" >0%</text><text x="658.27" y="351.23" font-size="9.2" fill="#444" textLength="19.33" lengthAdjust="spacingAndGlyphs" >-16%</text><text x="658.27" y="372.49" font-size="9.2" fill="#444" textLength="19.33" lengthAdjust="spacingAndGlyphs" >-32%</text><text x="658.27" y="393.75" font-size="9.2" fill="#444" textLength="19.33" lengthAdjust="spacingAndGlyphs" >-48%</text><text x="658.27" y="415.02" font-size="9.2" fill="#444" textLength="19.33" lengthAdjust="spacingAndGlyphs" >-64%</text><text x="658.27" y="436.28" font-size="9.2" fill="#444" textLength="19.33" lengthAdjust="spacingAndGlyphs" >-80%</text><text x="658.27" y="457.54" font-size="9.2" fill="#444" textLength="19.33" lengthAdjust="spacingAndGlyphs" >-96%</text><text x="654.28" y="478.80" font-size="9.2" fill="#444" textLength="23.32" lengthAdjust="spacingAndGlyphs" >-112%</text><text x="743.00" y="487.20" font-size="9.2" fill="#333" textLength="14.60" lengthAdjust="spacingAndGlyphs" >200</text><text x="812.30" y="487.20" font-size="9.2" fill="#333" textLength="14.60" lengthAdjust="spacingAndGlyphs" >210</text><text x="881.60" y="487.20" font-size="9.2" fill="#333" textLength="14.60" lengthAdjust="spacingAndGlyphs" >220</text><text x="950.90" y="487.20" font-size="9.2" fill="#333" textLength="14.60" lengthAdjust="spacingAndGlyphs" >230</text><text x="1020.20" y="487.20" font-size="9.2" fill="#333" textLength="14.60" lengthAdjust="spacingAndGlyphs" >240</text><text x="737.18" y="193.90" font-size="9.2" fill="#333" textLength="26.23" lengthAdjust="spacingAndGlyphs" >-10.7%</text><text x="808.79" y="193.90" font-size="9.2" fill="#333" textLength="21.63" lengthAdjust="spacingAndGlyphs" >-6.2%</text><text x="878.09" y="193.90" font-size="9.2" fill="#333" textLength="21.63" lengthAdjust="spacingAndGlyphs" >-1.7%</text><text x="948.76" y="193.90" font-size="9.2" fill="#333" textLength="18.87" lengthAdjust="spacingAndGlyphs" >2.7%</text><text x="1018.06" y="193.90" font-size="9.2" fill="#333" textLength="18.87" lengthAdjust="spacingAndGlyphs" >7.2%</text><rect x="903.4" y="183.6" width="25.2" height="10" fill="#eef2fa" stroke="#6c7a90" stroke-width="0.9"/><text x="906.56" y="192.60" font-size="9.2" fill="#333" textLength="18.87" lengthAdjust="spacingAndGlyphs" >0.0%</text><text transform="translate(877.3,201.8) rotate(-90)" text-anchor="end" font-size="8.8" fill="#5a8cc4">216.97</text><text transform="translate(901.3,201.8) rotate(-90)" text-anchor="end" font-size="8.8" fill="#a9c6ea">220.43</text><text transform="translate(939,201.8) rotate(-90)" text-anchor="end" font-size="8.8" fill="#a9c6ea">227.35</text><text transform="translate(963,201.8) rotate(-90)" text-anchor="end" font-size="8.8" fill="#5a8cc4">230.81</text><line x1="728.5" y1="198.0" x2="728.5" y2="474.4" stroke="#b860c8" stroke-width="1" stroke-dasharray="3,2.5"/><line x1="683.3" y1="325.6" x2="1080" y2="325.6" stroke="#3a3a3a" stroke-width="1.1"/><path d="M896.8,292.2 L924,296.2 L924,301.2 L896.8,297.2Z" fill="#c09a9e" opacity="0.85"/><path d="M683.7,284.2 C691.2,286.6 717.8,294.8 728.9,298.4 C740.0,302.0 735.4,302.0 750.3,305.6 C765.2,309.2 799.0,316.2 818.5,319.8 C838.0,323.4 853.8,325.5 867.4,327.3 C881.0,329.1 889.6,330.1 900.0,330.8 C910.4,331.5 920.0,331.6 930.0,331.7 C940.0,331.8 950.0,331.7 960.0,331.2 C970.0,330.7 978.8,330.3 990.0,328.5 C1001.2,326.7 1012.5,325.5 1027.5,320.5 C1042.5,315.5 1071.2,302.0 1080.0,298.3" fill="none" stroke="#f26a6a" stroke-width="1.3"/><path d="M683.7,304.1 C694.8,304.9 727.8,307.9 750.3,309.0 C772.8,310.1 800.2,310.7 818.5,311.0 C836.8,311.3 846.4,311.3 860.0,311.0 C873.6,310.7 883.3,310.1 900.0,309.2 C916.7,308.3 943.3,307.3 960.0,305.5 C976.7,303.7 988.8,301.1 1000.0,298.3 C1011.2,295.5 1014.2,294.3 1027.5,288.5 C1040.8,282.7 1071.2,267.5 1080.0,263.3" fill="none" stroke="#f26a6a" stroke-width="1.3"/><path d="M683.7,235.3 C689.8,237.5 708.9,244.5 720.0,248.5 C731.1,252.5 738.0,255.3 750.3,259.5 C762.6,263.7 782.6,270.2 794.0,273.5 C805.4,276.8 806.3,276.0 818.5,279.0 C830.7,282.0 853.8,288.3 867.4,291.3 C881.0,294.3 889.6,295.9 900.0,297.0 C910.4,298.1 920.0,298.2 930.0,297.8 C940.0,297.4 948.3,296.8 960.0,294.8 C971.7,292.8 988.8,288.7 1000.0,286.0 C1011.2,283.3 1014.2,283.3 1027.5,278.5 C1040.8,273.7 1071.2,260.8 1080.0,257.2" fill="none" stroke="#5ee65e" stroke-width="1.3"/><path d="M683.7,281.1 C694.8,282.5 727.8,286.8 750.3,289.3 C772.8,291.9 799.0,294.9 818.5,296.4 C838.0,297.8 853.8,297.6 867.4,298.0 C881.0,298.4 887.9,298.2 900.0,298.5 C912.1,298.8 928.3,299.6 940.0,299.8 C951.7,300.0 960.0,300.1 970.0,299.8 C980.0,299.5 990.4,299.4 1000.0,298.2 C1009.6,297.0 1014.2,296.2 1027.5,292.5 C1040.8,288.8 1071.2,278.8 1080.0,276.0" fill="none" stroke="#5ee65e" stroke-width="1.3"/><path d="M683.5,409 L750.3,286.3 L1027.5,286.3 L1084,251.7" fill="none" stroke="#1e8a1e" stroke-width="1.8"/><path d="M683.5,453.3 L750.3,330.8 L1027.5,330.8 L1084,295.7" fill="none" stroke="#5252d2" stroke-width="1.8"/><circle cx="915.8" cy="298.2" r="2.9" fill="#18e8f0" stroke="#222" stroke-width="0.9"/><rect x="640.9" y="292.2" width="38.9" height="10.5" fill="#0e8e0e"/><text x="678.00" y="301.20" text-anchor="end" font-size="8.8" fill="#ffffff" >21%</text><rect x="687.4" y="203.4" width="137.5" height="70.2" rx="4" fill="#eef2fa" fill-opacity="0.88" stroke="#8a94a8" stroke-width="0.9"/><rect x="694.1" y="209.6" width="3" height="10.6" fill="#f03a3a"/><text x="698.00" y="218.80" font-size="9.8" fill="#555" textLength="74.30" lengthAdjust="spacingAndGlyphs" >-7.20 Realized PnL</text><rect x="694.1" y="221.4" width="3" height="10.6" fill="#50cc50"/><text x="698.00" y="230.60" font-size="9.8" fill="#555" textLength="7.67" lengthAdjust="spacingAndGlyphs" >-1</text><text x="708.10" y="230.60" font-size="9.8" fill="#f06464" textLength="70.90" lengthAdjust="spacingAndGlyphs" >16may. 190 Put &#916;</text><text x="789.00" y="230.60" font-size="9.8" fill="#f06464" textLength="24.60" lengthAdjust="spacingAndGlyphs" >-23.45</text><rect x="694.1" y="233.1" width="3" height="10.6" fill="#7aa2ea"/><text x="698.00" y="242.30" font-size="9.8" fill="#555" textLength="9.83" lengthAdjust="spacingAndGlyphs" >+5</text><text x="710.50" y="242.30" font-size="9.8" fill="#5c5ce8" textLength="71.40" lengthAdjust="spacingAndGlyphs" >16may. 190 Put &#916;</text><text x="791.70" y="242.30" font-size="9.8" fill="#5c5ce8" textLength="24.60" lengthAdjust="spacingAndGlyphs" >-23.45</text><rect x="694.1" y="244.5" width="3" height="10.6" fill="#7aa2ea"/><text x="698.00" y="253.70" font-size="9.8" fill="#555" textLength="9.83" lengthAdjust="spacingAndGlyphs" >+1</text><text x="710.50" y="253.70" font-size="9.8" fill="#5c5ce8" textLength="72.50" lengthAdjust="spacingAndGlyphs" >16may. 240 Call &#916;</text><text x="796.70" y="253.70" font-size="9.8" fill="#5c5ce8" textLength="21.20" lengthAdjust="spacingAndGlyphs" >11.93</text><rect x="694.1" y="256.2" width="3" height="10.6" fill="#7aa2ea"/><text x="698.00" y="265.40" font-size="9.8" fill="#555" textLength="7.67" lengthAdjust="spacingAndGlyphs" >-3</text><text x="708.10" y="265.40" font-size="9.8" fill="#f06464" textLength="70.90" lengthAdjust="spacingAndGlyphs" >16may. 200 Put &#916;</text><text x="789.00" y="265.40" font-size="9.8" fill="#f06464" textLength="24.60" lengthAdjust="spacingAndGlyphs" >-29.50</text><text transform="translate(731,470) rotate(-90)" font-size="8" fill="#c8a8dc">196.95</text><text x="925.80" y="467.50" font-size="9.5" fill="#9a3aa8" textLength="25.00" lengthAdjust="spacingAndGlyphs" >62.5%</text><rect x="687.6" y="423.2" width="97" height="47.2" rx="4" fill="#eef2fa" fill-opacity="0.85" stroke="#8a94a8" stroke-width="0.9"/><text x="694.80" y="439.20" font-size="9.8" fill="#58aa58" textLength="56.40" lengthAdjust="spacingAndGlyphs" >16/05/2025 (0)</text><text x="694.80" y="450.90" font-size="9.8" fill="#f27a7a" textLength="83.20" lengthAdjust="spacingAndGlyphs" >25/04/2025 (21) T+21</text><text x="694.80" y="462.60" font-size="9.8" fill="#7ad87a" textLength="78.70" lengthAdjust="spacingAndGlyphs" >04/04/2025 (42) T+0</text><text transform="translate(729.5,442) rotate(-90)" font-size="8" fill="#c8a8e0" text-anchor="middle">6%</text><text transform="translate(729.5,465) rotate(-90)" font-size="8" fill="#c8a8e0" text-anchor="middle">6%</text><text x="721.00" y="460.30" font-size="9" fill="#707070" textLength="7.00" lengthAdjust="spacingAndGlyphs" >20</text><text x="693.60" y="467.00" font-size="10.5" fill="#8a369c" textLength="24.40" lengthAdjust="spacingAndGlyphs" >37.5%</text><rect x="639.3" y="492.7" width="460" height="158.8" rx="4" fill="#e9eef6" stroke="#a2aaba" stroke-width="1"/><text x="653.30" y="520.50" font-size="9.6" fill="#6a6a6a" textLength="16.10" lengthAdjust="spacingAndGlyphs" >PnL</text><text x="650.50" y="557.00" font-size="9.6" fill="#6a6a6a" textLength="21.70" lengthAdjust="spacingAndGlyphs" >Delta</text><text x="646.10" y="584.00" font-size="9.6" fill="#6a6a6a" textLength="31.50" lengthAdjust="spacingAndGlyphs" >Gamma</text><text x="650.50" y="611.80" font-size="9.6" fill="#6a6a6a" textLength="21.70" lengthAdjust="spacingAndGlyphs" >Theta</text><text x="651.60" y="638.30" font-size="9.6" fill="#6a6a6a" textLength="20.60" lengthAdjust="spacingAndGlyphs" >Vega</text><rect x="684.1" y="512.20" width="101.20" height="4.10" fill="#5a78ec" stroke="#585e72" stroke-width="0.8"/><rect x="785.3" y="512.80" width="69.30" height="3.50" fill="#5a78ec" stroke="#585e72" stroke-width="0.8"/><rect x="854.6" y="512.80" width="69.30" height="3.50" fill="#5a78ec" stroke="#585e72" stroke-width="0.8"/><rect x="923.9" y="512.60" width="69.30" height="3.70" fill="#5a78ec" stroke="#585e72" stroke-width="0.8"/><rect x="993.2" y="509.70" width="69.30" height="6.60" fill="#5a78ec" stroke="#585e72" stroke-width="0.8"/><rect x="1062.5" y="506.80" width="27.50" height="9.50" fill="#5a78ec" stroke="#585e72" stroke-width="0.8"/><rect x="684.1" y="552.50" width="101.20" height="2.10" fill="#f27878" stroke="#585e72" stroke-width="0.8"/><rect x="785.3" y="552.50" width="69.30" height="1.50" fill="#f27878" stroke="#585e72" stroke-width="0.8"/><line x1="854.6" y1="552.5" x2="923.9" y2="552.5" stroke="#707070" stroke-width="0.8"/><rect x="923.9" y="549.90" width="69.30" height="2.60" fill="#5a78ec" stroke="#585e72" stroke-width="0.8"/><rect x="993.2" y="547.30" width="69.30" height="5.20" fill="#5a78ec" stroke="#585e72" stroke-width="0.8"/><rect x="1062.5" y="543.50" width="27.50" height="9.00" fill="#5a78ec" stroke="#585e72" stroke-width="0.8"/><rect x="684.1" y="577.40" width="101.20" height="3.00" fill="#5a78ec" stroke="#585e72" stroke-width="0.8"/><rect x="785.3" y="577.40" width="69.30" height="3.00" fill="#5a78ec" stroke="#585e72" stroke-width="0.8"/><rect x="854.6" y="576.10" width="69.30" height="4.30" fill="#5a78ec" stroke="#585e72" stroke-width="0.8"/><rect x="923.9" y="573.00" width="69.30" height="7.40" fill="#5a78ec" stroke="#585e72" stroke-width="0.8"/><rect x="993.2" y="571.00" width="69.30" height="9.40" fill="#5a78ec" stroke="#585e72" stroke-width="0.8"/><rect x="1062.5" y="573.80" width="27.50" height="6.60" fill="#5a78ec" stroke="#585e72" stroke-width="0.8"/><rect x="684.1" y="607.60" width="101.20" height="9.00" fill="#f27878" stroke="#585e72" stroke-width="0.8"/><rect x="785.3" y="607.60" width="69.30" height="7.10" fill="#f27878" stroke="#585e72" stroke-width="0.8"/><rect x="854.6" y="607.60" width="69.30" height="6.20" fill="#f27878" stroke="#585e72" stroke-width="0.8"/><rect x="923.9" y="607.60" width="69.30" height="6.60" fill="#f27878" stroke="#585e72" stroke-width="0.8"/><rect x="993.2" y="607.60" width="69.30" height="6.60" fill="#f27878" stroke="#585e72" stroke-width="0.8"/><rect x="1062.5" y="607.60" width="27.50" height="4.60" fill="#f27878" stroke="#585e72" stroke-width="0.8"/><rect x="684.1" y="630.30" width="101.20" height="4.90" fill="#5a78ec" stroke="#585e72" stroke-width="0.8"/><rect x="785.3" y="632.00" width="69.30" height="3.20" fill="#5a78ec" stroke="#585e72" stroke-width="0.8"/><rect x="854.6" y="630.50" width="69.30" height="4.70" fill="#5a78ec" stroke="#585e72" stroke-width="0.8"/><rect x="923.9" y="627.80" width="69.30" height="7.40" fill="#5a78ec" stroke="#585e72" stroke-width="0.8"/><rect x="993.2" y="625.80" width="69.30" height="9.40" fill="#5a78ec" stroke="#585e72" stroke-width="0.8"/><rect x="1062.5" y="628.70" width="27.50" height="6.50" fill="#5a78ec" stroke="#585e72" stroke-width="0.8"/><text x="743.17" y="525.00" font-size="9.5" fill="#7a80f2" textLength="14.26" lengthAdjust="spacingAndGlyphs" >841</text><text x="812.47" y="525.00" font-size="9.5" fill="#7a80f2" textLength="14.26" lengthAdjust="spacingAndGlyphs" >703</text><text x="881.77" y="525.00" font-size="9.5" fill="#7a80f2" textLength="14.26" lengthAdjust="spacingAndGlyphs" >644</text><text x="951.07" y="525.00" font-size="9.5" fill="#7a80f2" textLength="14.26" lengthAdjust="spacingAndGlyphs" >740</text><text x="1018.63" y="525.00" font-size="9.5" fill="#7a80f2" textLength="17.75" lengthAdjust="spacingAndGlyphs" >1113</text><text x="741.74" y="533.20" font-size="9.5" fill="#7a80f2" textLength="17.11" lengthAdjust="spacingAndGlyphs" >27%</text><text x="811.04" y="533.20" font-size="9.5" fill="#7a80f2" textLength="17.11" lengthAdjust="spacingAndGlyphs" >22%</text><text x="880.34" y="533.20" font-size="9.5" fill="#7a80f2" textLength="17.11" lengthAdjust="spacingAndGlyphs" >21%</text><text x="949.64" y="533.20" font-size="9.5" fill="#7a80f2" textLength="17.11" lengthAdjust="spacingAndGlyphs" >24%</text><text x="1018.94" y="533.20" font-size="9.5" fill="#7a80f2" textLength="17.11" lengthAdjust="spacingAndGlyphs" >36%</text><text x="738.18" y="552.00" font-size="9.5" fill="#f27a7a" textLength="24.24" lengthAdjust="spacingAndGlyphs" >-17.02</text><text x="807.48" y="552.00" font-size="9.5" fill="#f27a7a" textLength="24.24" lengthAdjust="spacingAndGlyphs" >-10.42</text><text x="879.16" y="552.00" font-size="9.5" fill="#f27a7a" textLength="19.49" lengthAdjust="spacingAndGlyphs" >-0.13</text><text x="947.50" y="561.70" font-size="9.5" fill="#7a80f2" textLength="21.39" lengthAdjust="spacingAndGlyphs" >21.60</text><text x="1016.80" y="561.70" font-size="9.5" fill="#7a80f2" textLength="21.39" lengthAdjust="spacingAndGlyphs" >53.74</text><text x="741.98" y="589.00" font-size="9.5" fill="#7a80f2" textLength="16.64" lengthAdjust="spacingAndGlyphs" >0.66</text><text x="811.28" y="589.00" font-size="9.5" fill="#7a80f2" textLength="16.64" lengthAdjust="spacingAndGlyphs" >0.73</text><text x="880.58" y="589.00" font-size="9.5" fill="#7a80f2" textLength="16.64" lengthAdjust="spacingAndGlyphs" >1.43</text><text x="949.88" y="589.00" font-size="9.5" fill="#7a80f2" textLength="16.64" lengthAdjust="spacingAndGlyphs" >2.86</text><text x="1019.18" y="589.00" font-size="9.5" fill="#7a80f2" textLength="16.64" lengthAdjust="spacingAndGlyphs" >3.28</text><text x="738.18" y="607.60" font-size="9.5" fill="#f27a7a" textLength="24.24" lengthAdjust="spacingAndGlyphs" >-19.01</text><text x="807.48" y="607.60" font-size="9.5" fill="#f27a7a" textLength="24.24" lengthAdjust="spacingAndGlyphs" >-16.45</text><text x="876.78" y="607.60" font-size="9.5" fill="#f27a7a" textLength="24.24" lengthAdjust="spacingAndGlyphs" >-14.83</text><text x="946.08" y="607.60" font-size="9.5" fill="#f27a7a" textLength="24.24" lengthAdjust="spacingAndGlyphs" >-14.82</text><text x="1015.38" y="607.60" font-size="9.5" fill="#f27a7a" textLength="24.24" lengthAdjust="spacingAndGlyphs" >-13.84</text><text x="739.60" y="644.00" font-size="9.5" fill="#7a80f2" textLength="21.39" lengthAdjust="spacingAndGlyphs" >22.31</text><text x="808.90" y="644.00" font-size="9.5" fill="#7a80f2" textLength="21.39" lengthAdjust="spacingAndGlyphs" >20.99</text><text x="878.20" y="644.00" font-size="9.5" fill="#7a80f2" textLength="21.39" lengthAdjust="spacingAndGlyphs" >25.55</text><text x="947.50" y="644.00" font-size="9.5" fill="#7a80f2" textLength="21.39" lengthAdjust="spacingAndGlyphs" >37.23</text><text x="1016.80" y="644.00" font-size="9.5" fill="#7a80f2" textLength="21.39" lengthAdjust="spacingAndGlyphs" >41.43</text><path d="M894.6,481 Q894.6,478 897.6,478 L933.5,478 Q936.5,478 936.5,481 L936.5,646.7 Q936.5,649.7 933.5,649.7 L897.6,649.7 Q894.6,649.7 894.6,646.7Z" fill="#eef2f8" fill-opacity="0.8" stroke="#7a8294" stroke-width="0.9"/><text x="902.14" y="487.80" font-size="9.5" fill="#222" textLength="26.73" lengthAdjust="spacingAndGlyphs" >223.89</text><text x="915.80" y="516.00" text-anchor="middle" font-size="9.6" fill="#2a2ae6" font-weight="bold" >657</text><text x="915.80" y="529.70" text-anchor="middle" font-size="9.6" fill="#2a2ae6" font-weight="bold" >21.0%</text><text x="915.80" y="556.50" text-anchor="middle" font-size="9.6" fill="#2a2ae6" font-weight="bold" >6.65</text><text x="915.80" y="584.00" text-anchor="middle" font-size="9.6" fill="#2a2ae6" font-weight="bold" >2.01</text><text x="915.80" y="612.00" text-anchor="middle" font-size="9.6" fill="#ea2a2a" font-weight="bold" >-14.71</text><text x="915.80" y="639.60" text-anchor="middle" font-size="9.6" fill="#2a2ae6" font-weight="bold" >29.74</text></svg>
<div style="position:absolute;left:635px;top:654px;width:445px;height:21px;background:#293652;"></div>
<div class="t" style="left:1043.30px;top:659.89px;font-size:11px;line-height:11px;color:#ffffff;transform:scaleX(0.9242);transform-origin:0 0;">100%</div>
<div style="position:absolute;left:1077px;top:665px;width:3px;height:1px;background:#9aa2b2;"></div>
</body></html>
